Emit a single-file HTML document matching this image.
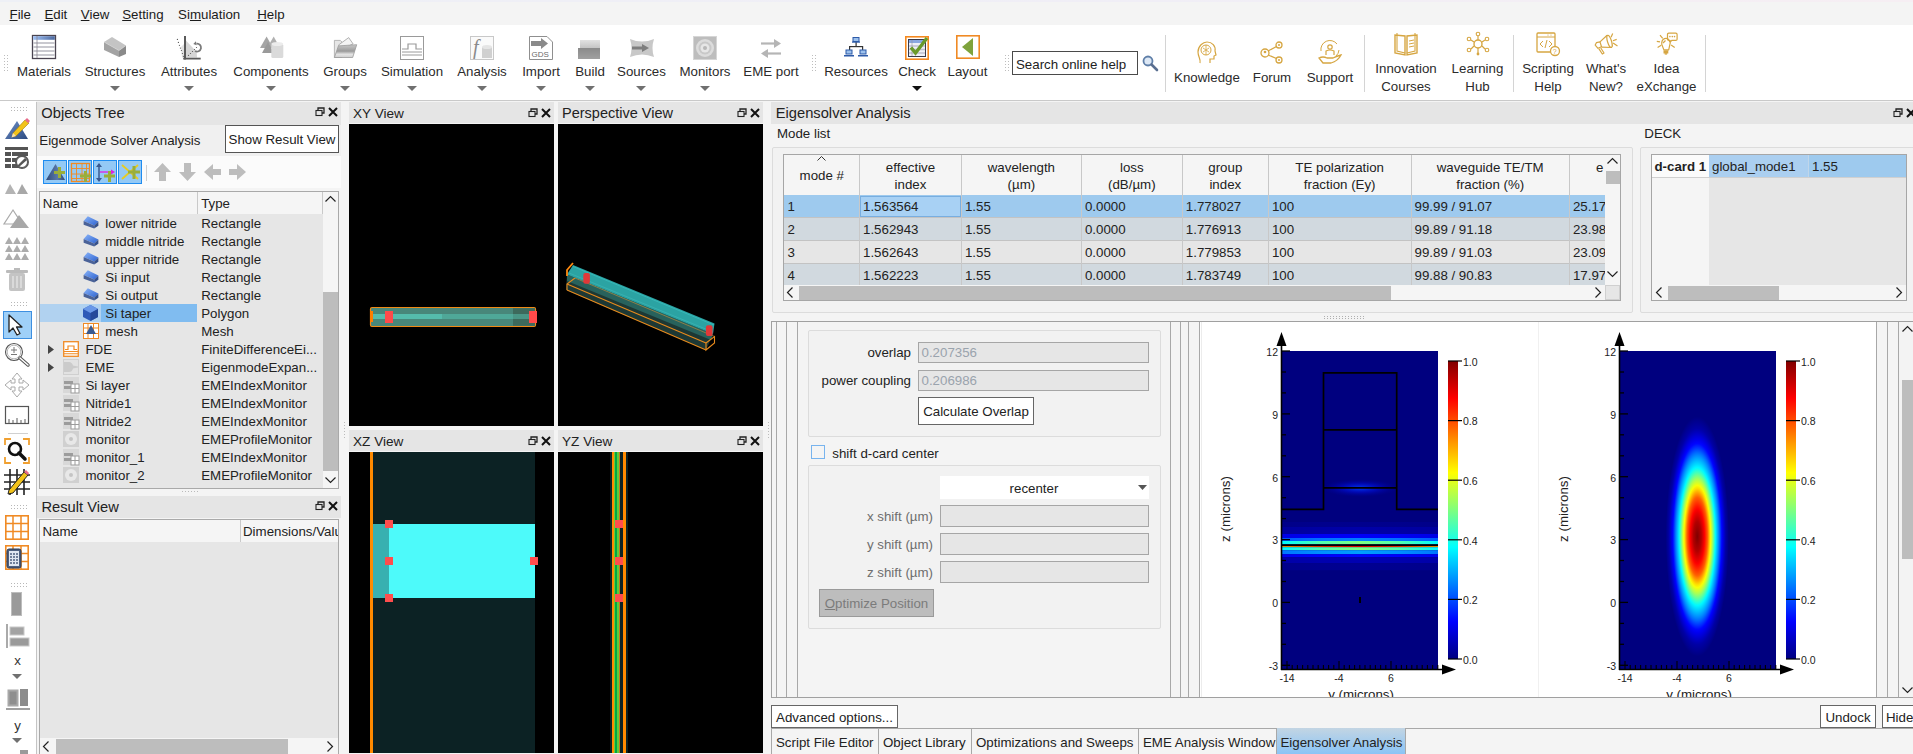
<!DOCTYPE html>
<html><head><meta charset="utf-8"><title>MODE</title>
<style>
html,body{margin:0;padding:0;}
body{width:1913px;height:754px;overflow:hidden;position:relative;background:#f4f4f4;font-family:"Liberation Sans",sans-serif;color:#1b1b1b;}
.a{position:absolute;}
.t{position:absolute;white-space:nowrap;}
svg{overflow:visible;}
</style></head><body>

<div class="a" style="left:0px;top:0px;width:1913px;height:25px;background:#f4f4f4;"></div>
<div class="a" style="left:0;top:0;width:1913px;height:2px;background:linear-gradient(90deg,#eef0f6,#f0eef6 60%,#f6eef3);"></div>
<div class="t " style="left:9.5px;top:7.7px;font-size:13.3px;line-height:13.3px;"><u>F</u>ile</div>
<div class="t " style="left:44.4px;top:7.7px;font-size:13.3px;line-height:13.3px;"><u>E</u>dit</div>
<div class="t " style="left:80.8px;top:7.7px;font-size:13.3px;line-height:13.3px;"><u>V</u>iew</div>
<div class="t " style="left:122.2px;top:7.7px;font-size:13.3px;line-height:13.3px;"><u>S</u>etting</div>
<div class="t " style="left:178.1px;top:7.7px;font-size:13.3px;line-height:13.3px;">Si<u>m</u>ulation</div>
<div class="t " style="left:257.2px;top:7.7px;font-size:13.3px;line-height:13.3px;"><u>H</u>elp</div>
<div class="a" style="left:0px;top:25px;width:1913px;height:75px;background:#ffffff;"></div>
<div class="a" style="left:0px;top:100px;width:1913px;height:1px;background:#c9c9c9;"></div>
<svg class="a" style="left:32px;top:35px;" width="24" height="24" viewBox="0 0 24 24"><defs><linearGradient id="mh" x1="0" x2="1"><stop offset="0" stop-color="#9ec0f5"/><stop offset="1" stop-color="#4d6aa0"/></linearGradient></defs>
<rect x="0.5" y="0.5" width="23" height="23" fill="#fff" stroke="#4a4450" stroke-width="1.3"/>
<rect x="1.2" y="1.2" width="21.6" height="3.6" fill="url(#mh)"/>
<rect x="1.2" y="7" width="21.6" height="2" fill="#c9c9cf"/><rect x="1.2" y="11" width="21.6" height="2" fill="#c9c9cf"/>
<rect x="1.2" y="15" width="21.6" height="2" fill="#c9c9cf"/><rect x="1.2" y="19" width="21.6" height="2" fill="#c9c9cf"/>
<line x1="5" y1="1" x2="5" y2="23" stroke="#8a8590" stroke-width="0.8"/></svg>
<div class="t " style="left:-16.0px;width:120px;text-align:center;top:64.8px;font-size:13.3px;line-height:13.3px;color:#2b2b2b;">Materials</div>
<svg class="a" style="left:103px;top:35px;" width="24" height="24" viewBox="0 0 24 24"><polygon points="1,7 9,2 23,10.5 16,15.5" fill="#c4c4c4"/><polygon points="1,7 16,15.5 16,22 1,15" fill="#a3a3a3"/><polygon points="16,15.5 23,10.5 23,19 16,22" fill="#8a8a8a"/><polyline points="1,7 16,15.5 23,10.5" fill="none" stroke="#d8d8d8" stroke-width="0.6"/></svg>
<div class="t " style="left:55.0px;width:120px;text-align:center;top:64.8px;font-size:13.3px;line-height:13.3px;color:#2b2b2b;">Structures</div>
<svg class="a" style="left:110px;top:86px;" width="10" height="5" viewBox="0 0 10 5"><polygon points="0,0 10,0 5,5" fill="#707070"/></svg>
<svg class="a" style="left:177px;top:35px;" width="24" height="24" viewBox="0 0 24 24"><polygon points="4,12 7,9 7,22.5 5,22.5" fill="#e2e2e2"/><polygon points="9,5.4 19.7,17 20,22.5 9,22.5" fill="#d6d6d6"/><rect x="7" y="1" width="2" height="23.5" fill="#5a5a5a"/><rect x="6.2" y="22.7" width="17.5" height="1.8" fill="#5a5a5a"/><circle cx="0.4" cy="4.4" r="0.6" fill="#555"/><circle cx="1.4" cy="7.4" r="0.6" fill="#555"/><circle cx="2.4" cy="10.3" r="0.6" fill="#555"/><circle cx="3.4" cy="13.1" r="0.6" fill="#555"/><circle cx="4.4" cy="15.5" r="0.6" fill="#555"/><circle cx="5.4" cy="18.5" r="0.6" fill="#555"/><circle cx="6.4" cy="21.3" r="0.6" fill="#555"/><circle cx="11.5" cy="20.3" r="0.6" fill="#555"/><circle cx="13.5" cy="18.5" r="0.6" fill="#555"/><circle cx="15.5" cy="16.5" r="0.6" fill="#555"/><circle cx="17.5" cy="14.5" r="0.6" fill="#555"/><circle cx="19.5" cy="12.5" r="0.6" fill="#555"/><path d="M18,16 A4,4 0 1 0 19.5,8.6" fill="none" stroke="#7a7a7a" stroke-width="1.8"/><polygon points="16.3,9 18.9,6.2 19.6,10.3" fill="#7a7a7a"/></svg>
<div class="t " style="left:129.0px;width:120px;text-align:center;top:64.8px;font-size:13.3px;line-height:13.3px;color:#2b2b2b;">Attributes</div>
<svg class="a" style="left:184px;top:86px;" width="10" height="5" viewBox="0 0 10 5"><polygon points="0,0 10,0 5,5" fill="#707070"/></svg>
<svg class="a" style="left:259px;top:35px;" width="24" height="24" viewBox="0 0 24 24"><polygon points="7.6,1.5 14,13 1,13" fill="#a5a5a5"/><polygon points="14.7,1.5 21,13 8,13" fill="#b0b0b0"/><polygon points="9,7 15,18 3,18" fill="#9a9a9a"/>
<rect x="12.3" y="9" width="12" height="14" rx="1.5" fill="#dadada"/><ellipse cx="18.3" cy="9" rx="6" ry="2" fill="#ececec"/></svg>
<div class="t " style="left:211.0px;width:120px;text-align:center;top:64.8px;font-size:13.3px;line-height:13.3px;color:#2b2b2b;">Components</div>
<svg class="a" style="left:266px;top:86px;" width="10" height="5" viewBox="0 0 10 5"><polygon points="0,0 10,0 5,5" fill="#707070"/></svg>
<svg class="a" style="left:333px;top:35px;" width="24" height="24" viewBox="0 0 24 24"><defs><linearGradient id="gfr" x1="0" x2="0" y1="0" y2="1"><stop offset="0" stop-color="#c9c9c9"/><stop offset="0.5" stop-color="#9a9a9a"/><stop offset="0.75" stop-color="#e4e4e4"/><stop offset="1" stop-color="#cfcfcf"/></linearGradient></defs>
<polygon points="1.4,5.4 7.3,5.4 8.9,7 8.9,22.5 1.4,22.5" fill="#e6e6e6" stroke="#a8a8a8" stroke-width="0.8"/>
<polygon points="5.4,10.1 15.7,2.6 20.1,8.9 9,14" fill="#f4f4f4" stroke="#a0a0a0" stroke-width="0.8"/>
<polygon points="5.4,10.9 23.7,9.7 19.7,22.5 1.4,22.5" fill="url(#gfr)" stroke="#9a9a9a" stroke-width="0.8"/></svg>
<div class="t " style="left:285.0px;width:120px;text-align:center;top:64.8px;font-size:13.3px;line-height:13.3px;color:#2b2b2b;">Groups</div>
<svg class="a" style="left:340px;top:86px;" width="10" height="5" viewBox="0 0 10 5"><polygon points="0,0 10,0 5,5" fill="#707070"/></svg>
<svg class="a" style="left:400px;top:36px;" width="24" height="24" viewBox="0 0 24 24"><rect x="0.5" y="0.5" width="23" height="23" fill="#fff" stroke="#9a9a9a"/>
<polyline points="2,13 8,13 8,8 16,8 16,13 22,13" fill="none" stroke="#9a9a9a" stroke-width="1.2"/>
<line x1="2" y1="16" x2="22" y2="16" stroke="#9a9a9a"/><line x1="2" y1="19" x2="22" y2="19" stroke="#9a9a9a"/></svg>
<div class="t " style="left:352.0px;width:120px;text-align:center;top:64.8px;font-size:13.3px;line-height:13.3px;color:#2b2b2b;">Simulation</div>
<svg class="a" style="left:407px;top:86px;" width="10" height="5" viewBox="0 0 10 5"><polygon points="0,0 10,0 5,5" fill="#707070"/></svg>
<svg class="a" style="left:470px;top:36px;" width="24" height="24" viewBox="0 0 24 24"><rect x="0.5" y="0.5" width="23" height="23" fill="#fafafa" stroke="#c8c8c8"/>
<rect x="12" y="11" width="10" height="11" fill="#d0d0d0"/><ellipse cx="17" cy="11" rx="5" ry="2" fill="#e5e5e5"/>
<text x="3" y="18" font-family="Liberation Serif" font-style="italic" font-size="20" fill="#8a8a8a">f</text></svg>
<div class="t " style="left:422.0px;width:120px;text-align:center;top:64.8px;font-size:13.3px;line-height:13.3px;color:#2b2b2b;">Analysis</div>
<svg class="a" style="left:477px;top:86px;" width="10" height="5" viewBox="0 0 10 5"><polygon points="0,0 10,0 5,5" fill="#707070"/></svg>
<svg class="a" style="left:529px;top:36px;" width="24" height="24" viewBox="0 0 24 24"><polygon points="0.5,0.5 18,0.5 23.5,6 23.5,23.5 0.5,23.5" fill="#fff" stroke="#8f8f8f"/>
<polygon points="2,5 12,5 12,2 19,7.5 12,13 12,10 2,10" fill="#8a8a8a"/>
<text x="2.5" y="21" font-family="Liberation Sans" font-size="8" fill="#6a6a6a">GDS</text></svg>
<div class="t " style="left:481.0px;width:120px;text-align:center;top:64.8px;font-size:13.3px;line-height:13.3px;color:#2b2b2b;">Import</div>
<svg class="a" style="left:536px;top:86px;" width="10" height="5" viewBox="0 0 10 5"><polygon points="0,0 10,0 5,5" fill="#707070"/></svg>
<svg class="a" style="left:578px;top:37px;" width="24" height="24" viewBox="0 0 24 24"><defs><linearGradient id="bd1" x1="0" x2="0" y1="0" y2="1"><stop offset="0" stop-color="#e2e2e2"/><stop offset="1" stop-color="#c4c4c4"/></linearGradient><linearGradient id="bd2" x1="0" x2="0" y1="0" y2="1"><stop offset="0" stop-color="#8a8a8a"/><stop offset="1" stop-color="#a0a0a0"/></linearGradient></defs><rect x="2" y="3" width="20" height="8" fill="url(#bd1)"/><rect x="0" y="11" width="22" height="11" fill="url(#bd2)"/></svg>
<div class="t " style="left:530.0px;width:120px;text-align:center;top:64.8px;font-size:13.3px;line-height:13.3px;color:#2b2b2b;">Build</div>
<svg class="a" style="left:585px;top:86px;" width="10" height="5" viewBox="0 0 10 5"><polygon points="0,0 10,0 5,5" fill="#707070"/></svg>
<svg class="a" style="left:630px;top:37px;" width="24" height="24" viewBox="0 0 24 24"><path d="M0,2 Q12,7 24,2 Q21,11 24,20 Q12,15 0,20 Q3,11 0,2 Z" fill="#c8c8c8"/><polygon points="2,9.5 12,9.5 12,7 19,11 12,15 12,12.5 2,12.5" fill="#7e7e7e"/></svg>
<div class="t " style="left:581.5px;width:120px;text-align:center;top:64.8px;font-size:13.3px;line-height:13.3px;color:#2b2b2b;">Sources</div>
<svg class="a" style="left:636px;top:86px;" width="10" height="5" viewBox="0 0 10 5"><polygon points="0,0 10,0 5,5" fill="#707070"/></svg>
<svg class="a" style="left:693px;top:36px;" width="24" height="24" viewBox="0 0 24 24"><rect x="0.5" y="0.5" width="23" height="23" fill="#bdbdbd" stroke="#d6d6d6"/><circle cx="12" cy="12" r="9" fill="#dcdcdc"/><circle cx="12" cy="12" r="6.5" fill="#c8c8c8"/><circle cx="12" cy="12" r="4.5" fill="#e6e6e6"/><circle cx="12" cy="12" r="2" fill="#b8b8b8"/></svg>
<div class="t " style="left:645.0px;width:120px;text-align:center;top:64.8px;font-size:13.3px;line-height:13.3px;color:#2b2b2b;">Monitors</div>
<svg class="a" style="left:700px;top:86px;" width="10" height="5" viewBox="0 0 10 5"><polygon points="0,0 10,0 5,5" fill="#707070"/></svg>
<svg class="a" style="left:759px;top:38px;" width="24" height="24" viewBox="0 0 24 24"><path d="M2,5.5 L17,5.5" stroke="#b5b5b5" stroke-width="2.2"/><polygon points="15,1 22,5.5 15,10" fill="#b5b5b5"/><path d="M22,15.5 L7,15.5" stroke="#b5b5b5" stroke-width="2.2"/><polygon points="9,11 2,15.5 9,20" fill="#b5b5b5"/></svg>
<div class="t " style="left:711.0px;width:120px;text-align:center;top:64.8px;font-size:13.3px;line-height:13.3px;color:#2b2b2b;">EME port</div>
<svg class="a" style="left:844px;top:37px;" width="24" height="24" viewBox="0 0 24 24"><rect x="8.5" y="0" width="7" height="5" fill="#2d5aa8"/><rect x="9.5" y="1" width="5" height="3" fill="#9cc0ec"/><rect x="11.5" y="5" width="1.2" height="5" fill="#333"/><rect x="5" y="9" width="14" height="1.2" fill="#333"/><rect x="5" y="9" width="1.2" height="4" fill="#333"/><rect x="18" y="9" width="1.2" height="4" fill="#333"/>
<rect x="1.5" y="12.5" width="7" height="5" fill="#2d5aa8"/><rect x="2.5" y="13.5" width="5" height="3" fill="#9cc0ec"/><rect x="15.5" y="12.5" width="7" height="5" fill="#2d5aa8"/><rect x="16.5" y="13.5" width="5" height="3" fill="#9cc0ec"/>
<rect x="0" y="18" width="10" height="1.5" fill="#2d5aa8"/><rect x="14" y="18" width="10" height="1.5" fill="#2d5aa8"/><rect x="8" y="4.5" width="8" height="1.2" fill="#2d5aa8"/></svg>
<div class="t " style="left:796.0px;width:120px;text-align:center;top:64.8px;font-size:13.3px;line-height:13.3px;color:#2b2b2b;">Resources</div>
<svg class="a" style="left:905px;top:36px;" width="24" height="24" viewBox="0 0 24 24"><rect x="0.8" y="0.8" width="22.4" height="22.4" fill="#fff" stroke="#f5891f" stroke-width="1.6"/>
<rect x="3.5" y="3.5" width="17" height="17" fill="#eef0f6" stroke="#3a3a48" stroke-width="1"/><rect x="4" y="4" width="16" height="3" fill="#8aa8e0"/><path d="M4,10 h16 M4,13.5 h16 M4,17 h16" stroke="#c0c0d0" stroke-width="1.4"/><line x1="7" y1="4" x2="7" y2="20" stroke="#9090a0" stroke-width="0.6"/>
<polyline points="6,11.5 10.5,17 22,2" fill="none" stroke="#6a9a2a" stroke-width="3.4"/></svg>
<div class="t " style="left:857.0px;width:120px;text-align:center;top:64.8px;font-size:13.3px;line-height:13.3px;color:#2b2b2b;">Check</div>
<svg class="a" style="left:912px;top:86px;" width="10" height="5" viewBox="0 0 10 5"><polygon points="0,0 10,0 5,5" fill="#111"/></svg>
<svg class="a" style="left:956px;top:35px;" width="24" height="24" viewBox="0 0 24 24"><rect x="0.8" y="0.8" width="22.4" height="22.4" fill="#fff" stroke="#f08a24" stroke-width="1.6"/><polygon points="17,3 17,21 6,12" fill="#7ea33c"/></svg>
<div class="t " style="left:907.5px;width:120px;text-align:center;top:64.8px;font-size:13.3px;line-height:13.3px;color:#2b2b2b;">Layout</div>
<svg class="a" style="left:4px;top:55px;" width="6" height="18" viewBox="0 0 6 18"><rect x="0" y="0" width="1" height="1" fill="#bdbdbd"/><rect x="0" y="3" width="1" height="1" fill="#bdbdbd"/><rect x="0" y="6" width="1" height="1" fill="#bdbdbd"/><rect x="0" y="9" width="1" height="1" fill="#bdbdbd"/><rect x="0" y="12" width="1" height="1" fill="#bdbdbd"/><rect x="0" y="15" width="1" height="1" fill="#bdbdbd"/><rect x="3" y="0" width="1" height="1" fill="#bdbdbd"/><rect x="3" y="3" width="1" height="1" fill="#bdbdbd"/><rect x="3" y="6" width="1" height="1" fill="#bdbdbd"/><rect x="3" y="9" width="1" height="1" fill="#bdbdbd"/><rect x="3" y="12" width="1" height="1" fill="#bdbdbd"/><rect x="3" y="15" width="1" height="1" fill="#bdbdbd"/></svg>
<svg class="a" style="left:812px;top:55px;" width="6" height="18" viewBox="0 0 6 18"><rect x="0" y="0" width="1" height="1" fill="#bdbdbd"/><rect x="0" y="3" width="1" height="1" fill="#bdbdbd"/><rect x="0" y="6" width="1" height="1" fill="#bdbdbd"/><rect x="0" y="9" width="1" height="1" fill="#bdbdbd"/><rect x="0" y="12" width="1" height="1" fill="#bdbdbd"/><rect x="0" y="15" width="1" height="1" fill="#bdbdbd"/><rect x="3" y="0" width="1" height="1" fill="#bdbdbd"/><rect x="3" y="3" width="1" height="1" fill="#bdbdbd"/><rect x="3" y="6" width="1" height="1" fill="#bdbdbd"/><rect x="3" y="9" width="1" height="1" fill="#bdbdbd"/><rect x="3" y="12" width="1" height="1" fill="#bdbdbd"/><rect x="3" y="15" width="1" height="1" fill="#bdbdbd"/></svg>
<svg class="a" style="left:1005px;top:55px;" width="6" height="18" viewBox="0 0 6 18"><rect x="0" y="0" width="1" height="1" fill="#bdbdbd"/><rect x="0" y="3" width="1" height="1" fill="#bdbdbd"/><rect x="0" y="6" width="1" height="1" fill="#bdbdbd"/><rect x="0" y="9" width="1" height="1" fill="#bdbdbd"/><rect x="0" y="12" width="1" height="1" fill="#bdbdbd"/><rect x="0" y="15" width="1" height="1" fill="#bdbdbd"/><rect x="3" y="0" width="1" height="1" fill="#bdbdbd"/><rect x="3" y="3" width="1" height="1" fill="#bdbdbd"/><rect x="3" y="6" width="1" height="1" fill="#bdbdbd"/><rect x="3" y="9" width="1" height="1" fill="#bdbdbd"/><rect x="3" y="12" width="1" height="1" fill="#bdbdbd"/><rect x="3" y="15" width="1" height="1" fill="#bdbdbd"/></svg>
<div class="a" style="left:1012px;top:51px;width:126px;height:24px;background:#fff;box-sizing:border-box;border:1.3px solid #4a4a4a;"></div>
<div class="t " style="left:1016.0px;top:57.7px;font-size:13.3px;line-height:13.3px;color:#222;">Search online help</div>
<svg class="a" style="left:1142px;top:55px;" width="16" height="16" viewBox="0 0 16 16"><circle cx="6" cy="6" r="4.5" fill="#dde8f5" stroke="#5f7fa8" stroke-width="1.8"/><line x1="9.5" y1="9.5" x2="15" y2="15" stroke="#5a6f90" stroke-width="2.6" stroke-linecap="round"/></svg>
<div class="a" style="left:1165px;top:35px;width:1px;height:57px;background:#d4d4d4;"></div>
<div class="a" style="left:1364px;top:35px;width:1px;height:57px;background:#d4d4d4;"></div>
<div class="a" style="left:1513px;top:35px;width:1px;height:57px;background:#d4d4d4;"></div>
<div class="a" style="left:1705px;top:35px;width:1px;height:57px;background:#d4d4d4;"></div>
<svg class="a" style="left:1195px;top:41px;" width="24" height="24" viewBox="0 0 24 24"><path d="M5,22 C6,18 3,16 3,11 C3,5 8,1 12,1 C17,1 21,5 20,10 L21,14 L19,15 L19,18 L15,18 L15,22" fill="none" stroke="#d6a642" stroke-width="1.2"/>
<circle cx="11" cy="9" r="5" fill="none" stroke="#d6a642" stroke-width="1"/><path d="M8,7 L14,11 M14,7 L8,11 M11,4 L11,14" stroke="#d6a642" stroke-width="0.8"/></svg>
<div class="t " style="left:1147.0px;width:120px;text-align:center;top:70.8px;font-size:13.3px;line-height:13.3px;color:#2b2b2b;">Knowledge</div>
<svg class="a" style="left:1260px;top:41px;" width="24" height="24" viewBox="0 0 24 24"><circle cx="5" cy="12" r="4" fill="none" stroke="#d6a642" stroke-width="1.3"/><circle cx="19" cy="4" r="3" fill="none" stroke="#d6a642" stroke-width="1.3"/><circle cx="19" cy="19" r="3" fill="none" stroke="#d6a642" stroke-width="1.3"/>
<line x1="8" y1="10" x2="16.5" y2="5.5" stroke="#d6a642" stroke-width="1.3"/><line x1="8" y1="14" x2="16.5" y2="17.5" stroke="#d6a642" stroke-width="1.3"/><circle cx="5" cy="11" r="1.3" fill="#d6a642"/><circle cx="19" cy="4" r="1" fill="#d6a642"/><circle cx="19" cy="19" r="1" fill="#d6a642"/></svg>
<div class="t " style="left:1212.0px;width:120px;text-align:center;top:70.8px;font-size:13.3px;line-height:13.3px;color:#2b2b2b;">Forum</div>
<svg class="a" style="left:1318px;top:41px;" width="24" height="24" viewBox="0 0 24 24"><circle cx="12" cy="6" r="2.2" fill="none" stroke="#d6a642" stroke-width="1.2"/><path d="M8,14 L8,10 Q12,8 16,10 L16,14" fill="none" stroke="#d6a642" stroke-width="1.2"/>
<path d="M3,10 A9,9 0 0 1 19,3" fill="none" stroke="#d6a642" stroke-width="1"/><path d="M21,9 A9,9 0 0 1 18,15" fill="none" stroke="#d6a642" stroke-width="1"/>
<path d="M1,17 Q5,15 9,17 L15,17 Q19,15 23,14 Q20,20 13,22 L5,22 Z" fill="none" stroke="#d6a642" stroke-width="1.3"/></svg>
<div class="t " style="left:1270.0px;width:120px;text-align:center;top:70.8px;font-size:13.3px;line-height:13.3px;color:#2b2b2b;">Support</div>
<svg class="a" style="left:1394px;top:32px;" width="24" height="24" viewBox="0 0 24 24"><path d="M1,3 L1,21 L11,23 L11,4 Z M23,3 L23,21 L13,23 L13,4 Z" fill="none" stroke="#d6a642" stroke-width="1.4"/><path d="M3,1 L3,19 L11,21 M21,1 L21,19 L13,21" fill="none" stroke="#d6a642" stroke-width="1.1"/>
<line x1="15" y1="9" x2="20" y2="8" stroke="#d6a642"/><line x1="15" y1="12" x2="20" y2="11" stroke="#d6a642"/><line x1="15" y1="15" x2="20" y2="14" stroke="#d6a642"/></svg>
<div class="t " style="left:1346.0px;width:120px;text-align:center;top:62.1px;font-size:13.3px;line-height:13.3px;color:#2b2b2b;">Innovation</div>
<div class="t " style="left:1346.0px;width:120px;text-align:center;top:79.8px;font-size:13.3px;line-height:13.3px;color:#2b2b2b;">Courses</div>
<svg class="a" style="left:1466px;top:32px;" width="24" height="24" viewBox="0 0 24 24"><circle cx="12" cy="12" r="4" fill="none" stroke="#d6a642" stroke-width="1.4"/><circle cx="12" cy="2" r="1.8" fill="none" stroke="#d6a642" stroke-width="1.1"/><line x1="12" y1="4" x2="12" y2="8" stroke="#d6a642" stroke-width="1.2"/>
<circle cx="3" cy="7" r="1.8" fill="none" stroke="#d6a642" stroke-width="1.1"/><circle cx="21" cy="7" r="1.8" fill="none" stroke="#d6a642" stroke-width="1.1"/><circle cx="3" cy="18" r="1.8" fill="none" stroke="#d6a642" stroke-width="1.1"/><circle cx="21" cy="18" r="1.8" fill="none" stroke="#d6a642" stroke-width="1.1"/><circle cx="12" cy="22" r="1.4" fill="#d6a642"/>
<path d="M5,8 L8,10 M19,8 L16,10 M5,17 L8,14 M19,17 L16,14 M12,16 L12,21" stroke="#d6a642" stroke-width="1.2"/></svg>
<div class="t " style="left:1417.5px;width:120px;text-align:center;top:62.1px;font-size:13.3px;line-height:13.3px;color:#2b2b2b;">Learning</div>
<div class="t " style="left:1417.5px;width:120px;text-align:center;top:79.8px;font-size:13.3px;line-height:13.3px;color:#2b2b2b;">Hub</div>
<svg class="a" style="left:1536px;top:32px;" width="24" height="24" viewBox="0 0 24 24"><rect x="1" y="1" width="18" height="19" rx="1" fill="none" stroke="#d6a642" stroke-width="1.3"/><line x1="1" y1="5" x2="19" y2="5" stroke="#d6a642"/><path d="M7,9 L4,12 L7,15 M11,8 L9,16 M13,9 L16,12 L13,15" fill="none" stroke="#d6a642" stroke-width="1"/>
<circle cx="19" cy="19" r="4.5" fill="#fff" stroke="#d6a642" stroke-width="1.3"/><text x="16.8" y="22" font-size="7" font-family="Liberation Sans" fill="#d6a642">?</text><circle cx="12" cy="3" r="0.6" fill="#d6a642"/><circle cx="15" cy="3" r="0.6" fill="#d6a642"/></svg>
<div class="t " style="left:1488.0px;width:120px;text-align:center;top:62.1px;font-size:13.3px;line-height:13.3px;color:#2b2b2b;">Scripting</div>
<div class="t " style="left:1488.0px;width:120px;text-align:center;top:79.8px;font-size:13.3px;line-height:13.3px;color:#2b2b2b;">Help</div>
<svg class="a" style="left:1594px;top:32px;" width="24" height="24" viewBox="0 0 24 24"><g fill="none" stroke="#d6a642" stroke-width="1.2" stroke-linejoin="round">
<polygon points="1.2,13.1 2.4,10.7 6,9.9 7.5,14.7 4,16.3"/>
<path d="M6,9.9 L13.1,3.2 M7.5,15.1 L17.9,15.5"/>
<ellipse cx="15.5" cy="9.4" rx="2" ry="6.3" transform="rotate(-18 15.5 9.4)"/>
<path d="M4.8,16.7 L8.3,22 L10,21 L6.8,16"/>
<path d="M17.1,5.2 L18.7,1.6 M18.9,8.7 L22.7,7.4 M19.1,11.1 L23.5,13.9"/></g></svg>
<div class="t " style="left:1546.0px;width:120px;text-align:center;top:62.1px;font-size:13.3px;line-height:13.3px;color:#2b2b2b;">What's</div>
<div class="t " style="left:1546.0px;width:120px;text-align:center;top:79.8px;font-size:13.3px;line-height:13.3px;color:#2b2b2b;">New?</div>
<svg class="a" style="left:1654px;top:32px;" width="24" height="24" viewBox="0 0 24 24"><g fill="none" stroke="#d6a642" stroke-width="1.2" stroke-linejoin="round">
<path d="M9.9,17.9 L7.8,12.5 Q7.2,8 10.5,6.6 Q13,5.8 14.5,7.5 L16.3,10.7 L14.7,17.9 Z"/>
<path d="M9,11 L11.5,8.5"/>
<path d="M13.5,2.2 Q13.5,1.2 14.8,1.2 L21.8,1.2 Q23.1,1.2 23.1,2.4 L23.1,7.2 Q23.1,8.3 21.8,8.3 L18,8.3 L16.3,9.8 L16,8.3 L14.8,8.3 Q13.5,8.3 13.5,7 Z"/>
<path d="M6,3.2 L8.7,6.4 M2.8,9.3 L6,9.9 M3.6,15.5 L7.2,13.3 M17.1,13.1 L20.7,15.5"/></g>
<rect x="9.5" y="18.3" width="4.8" height="3.2" fill="#d6a642"/><rect x="10.7" y="21.2" width="2.4" height="1.4" fill="#d6a642"/>
<circle cx="15.9" cy="4.6" r="0.8" fill="#d6a642"/><circle cx="18.3" cy="4.6" r="0.8" fill="#d6a642"/><circle cx="20.5" cy="4.6" r="0.8" fill="#d6a642"/></svg>
<div class="t " style="left:1606.5px;width:120px;text-align:center;top:62.1px;font-size:13.3px;line-height:13.3px;color:#2b2b2b;">Idea</div>
<div class="t " style="left:1606.5px;width:120px;text-align:center;top:79.8px;font-size:13.3px;line-height:13.3px;color:#2b2b2b;">eXchange</div>
<div class="a" style="left:0px;top:101px;width:36px;height:653px;background:#ffffff;"></div>
<div class="a" style="left:36px;top:102px;width:1px;height:652px;background:#c4c4c4;"></div>
<svg class="a" style="left:11px;top:107px;" width="18" height="6" viewBox="0 0 18 6"><rect x="0" y="0" width="1" height="1" fill="#b8b8b8"/><rect x="0" y="3" width="1" height="1" fill="#b8b8b8"/><rect x="3" y="0" width="1" height="1" fill="#b8b8b8"/><rect x="3" y="3" width="1" height="1" fill="#b8b8b8"/><rect x="6" y="0" width="1" height="1" fill="#b8b8b8"/><rect x="6" y="3" width="1" height="1" fill="#b8b8b8"/><rect x="9" y="0" width="1" height="1" fill="#b8b8b8"/><rect x="9" y="3" width="1" height="1" fill="#b8b8b8"/><rect x="12" y="0" width="1" height="1" fill="#b8b8b8"/><rect x="12" y="3" width="1" height="1" fill="#b8b8b8"/><rect x="15" y="0" width="1" height="1" fill="#b8b8b8"/><rect x="15" y="3" width="1" height="1" fill="#b8b8b8"/></svg>
<svg class="a" style="left:5px;top:117px;" width="24" height="22" viewBox="0 0 24 22"><defs><linearGradient id="ptri" x1="0" x2="1" y1="0" y2="1"><stop offset="0" stop-color="#6e8fc8"/><stop offset="1" stop-color="#2b4a80"/></linearGradient></defs>
<polygon points="12,4 23,22 0,22" fill="url(#ptri)"/><polygon points="8,16 20,3 24,6 11,19 7,20" fill="#f2c21a" stroke="#a07a10" stroke-width="0.6"/><polygon points="20,3 22,1 25,4 23,6" fill="#e86a8a"/><polygon points="8,16 11,19 6.5,20.5" fill="#f5e0b0"/></svg>
<svg class="a" style="left:5px;top:147px;" width="24" height="23" viewBox="0 0 24 23"><rect x="0" y="0" width="23" height="3" fill="#555"/><rect x="0" y="5" width="6" height="4" fill="#555"/><rect x="7" y="5" width="16" height="4" fill="#555"/>
<rect x="0" y="11" width="6" height="4" fill="#555"/><rect x="7" y="11" width="8" height="4" fill="#555"/><rect x="0" y="17" width="6" height="4" fill="#555"/><rect x="7" y="17" width="8" height="4" fill="#555"/>
<circle cx="17" cy="15" r="7" fill="#555"/><circle cx="17" cy="15" r="5.5" fill="#fff" stroke="#555"/><polygon points="12,19 20,11 22,13 14,20" fill="#555"/></svg>
<svg class="a" style="left:5px;top:184px;" width="24" height="10" viewBox="0 0 24 10"><polygon points="5,0 11,10 0,10" fill="#b4b4b4"/><polygon points="17,0 23,10 12,10" fill="#a8a8a8"/></svg>
<svg class="a" style="left:4px;top:209px;" width="26" height="19" viewBox="0 0 26 19"><polygon points="9,1 18,15 0,15" fill="none" stroke="#aaa" stroke-width="1.2"/><polygon points="15,6 25,19 6,19" fill="#a8a8a8"/></svg>
<svg class="a" style="left:5px;top:237px;" width="24" height="23" viewBox="0 0 24 23"><polygon points="4,0 8,7 0,7" fill="#acacac"/><polygon points="12,0 16,7 8,7" fill="#acacac"/><polygon points="20,0 24,7 16,7" fill="#acacac"/><polygon points="4,8 8,15 0,15" fill="#acacac"/><polygon points="12,8 16,15 8,15" fill="#acacac"/><polygon points="20,8 24,15 16,15" fill="#acacac"/><polygon points="4,16 8,23 0,23" fill="#acacac"/><polygon points="12,16 16,23 8,23" fill="#acacac"/><polygon points="20,16 24,23 16,23" fill="#acacac"/></svg>
<svg class="a" style="left:6px;top:268px;" width="22" height="23" viewBox="0 0 22 23"><rect x="3" y="5" width="16" height="18" rx="2" fill="#c4c4c4"/><rect x="0" y="2" width="22" height="3" rx="1" fill="#bbb"/><rect x="8" y="0" width="6" height="3" fill="#bbb"/><line x1="7" y1="8" x2="7" y2="20" stroke="#e2e2e2" stroke-width="1.5"/><line x1="11" y1="8" x2="11" y2="20" stroke="#e2e2e2" stroke-width="1.5"/><line x1="15" y1="8" x2="15" y2="20" stroke="#e2e2e2" stroke-width="1.5"/></svg>
<svg class="a" style="left:11px;top:302px;" width="18" height="6" viewBox="0 0 18 6"><rect x="0" y="0" width="1" height="1" fill="#b8b8b8"/><rect x="0" y="3" width="1" height="1" fill="#b8b8b8"/><rect x="3" y="0" width="1" height="1" fill="#b8b8b8"/><rect x="3" y="3" width="1" height="1" fill="#b8b8b8"/><rect x="6" y="0" width="1" height="1" fill="#b8b8b8"/><rect x="6" y="3" width="1" height="1" fill="#b8b8b8"/><rect x="9" y="0" width="1" height="1" fill="#b8b8b8"/><rect x="9" y="3" width="1" height="1" fill="#b8b8b8"/><rect x="12" y="0" width="1" height="1" fill="#b8b8b8"/><rect x="12" y="3" width="1" height="1" fill="#b8b8b8"/><rect x="15" y="0" width="1" height="1" fill="#b8b8b8"/><rect x="15" y="3" width="1" height="1" fill="#b8b8b8"/></svg>
<div class="a" style="left:3px;top:311px;width:29px;height:28px;background:#9fd0f8;box-sizing:border-box;border:1px solid #3d8fe0;"></div>
<svg class="a" style="left:8px;top:314px;" width="18" height="22" viewBox="0 0 18 22"><polygon points="1,1 1,18 5,14 9,21 12,19.5 8.5,13 14,13" fill="#fff" stroke="#222" stroke-width="1.3" stroke-linejoin="round"/></svg>
<svg class="a" style="left:4px;top:342px;" width="26" height="25" viewBox="0 0 26 25"><circle cx="10" cy="10" r="8.5" fill="#fff" stroke="#555" stroke-width="1.1"/><circle cx="10" cy="10" r="6.8" fill="none" stroke="#888" stroke-width="0.6"/><line x1="16" y1="16" x2="24" y2="23" stroke="#555" stroke-width="3.5" stroke-linecap="round"/><line x1="16" y1="16" x2="24" y2="23" stroke="#fff" stroke-width="1.5" stroke-linecap="round"/><path d="M7,8 L13,8 M10,5 L10,11 M7,12.5 L13,12.5" stroke="#777" stroke-width="1"/></svg>
<svg class="a" style="left:5px;top:373px;" width="24" height="24" viewBox="0 0 24 24"><polygon points="12,0 17,6 14,6 14,10 18,10 18,7 24,12 18,17 18,14 14,14 14,18 17,18 12,24 7,18 10,18 10,14 6,14 6,17 0,12 6,7 6,10 10,10 10,6 7,6" fill="#fff" stroke="#aaa" stroke-width="1"/></svg>
<svg class="a" style="left:5px;top:406px;" width="24" height="19" viewBox="0 0 24 19"><rect x="0.5" y="0.5" width="23" height="17" fill="#fff" stroke="#555" stroke-width="1.2"/><path d="M4,17 L4,13 M8,17 L8,14 M12,17 L12,12 M16,17 L16,14 M20,17 L20,13" stroke="#777" stroke-width="1.2"/></svg>
<div class="a" style="left:8px;top:433px;width:20px;height:1px;background:#d0d0d0;"></div>
<svg class="a" style="left:5px;top:439px;" width="24" height="25" viewBox="0 0 24 25"><path d="M0,6 L0,0 L6,0 M18,0 L24,0 L24,6 M24,18 L24,24 L18,24 M6,24 L0,24 L0,18" fill="none" stroke="#f0a030" stroke-width="1.8"/><circle cx="10" cy="10" r="6" fill="#fff" stroke="#111" stroke-width="2.6"/><line x1="14" y1="14" x2="20" y2="20" stroke="#111" stroke-width="3.5" stroke-linecap="round"/></svg>
<svg class="a" style="left:4px;top:469px;" width="26" height="26" viewBox="0 0 26 26"><path d="M6,0 L6,26 M13,0 L13,26 M20,0 L20,26 M0,6 L26,6 M0,13 L26,13 M0,20 L26,20" stroke="#222" stroke-width="1.6"/><polygon points="5,21 20,3 24,6 9,24 4,25" fill="#f2c21a" stroke="#222" stroke-width="1"/><polygon points="20,3 22,1 25,4 24,6" fill="#e86a8a"/></svg>
<svg class="a" style="left:11px;top:505px;" width="18" height="6" viewBox="0 0 18 6"><rect x="0" y="0" width="1" height="1" fill="#b8b8b8"/><rect x="0" y="3" width="1" height="1" fill="#b8b8b8"/><rect x="3" y="0" width="1" height="1" fill="#b8b8b8"/><rect x="3" y="3" width="1" height="1" fill="#b8b8b8"/><rect x="6" y="0" width="1" height="1" fill="#b8b8b8"/><rect x="6" y="3" width="1" height="1" fill="#b8b8b8"/><rect x="9" y="0" width="1" height="1" fill="#b8b8b8"/><rect x="9" y="3" width="1" height="1" fill="#b8b8b8"/><rect x="12" y="0" width="1" height="1" fill="#b8b8b8"/><rect x="12" y="3" width="1" height="1" fill="#b8b8b8"/><rect x="15" y="0" width="1" height="1" fill="#b8b8b8"/><rect x="15" y="3" width="1" height="1" fill="#b8b8b8"/></svg>
<svg class="a" style="left:5px;top:515px;" width="24" height="25" viewBox="0 0 24 25"><rect x="0.8" y="0.8" width="22.4" height="23.4" fill="#fff" stroke="#f08a24" stroke-width="1.6"/><path d="M8,1 L8,24 M16,1 L16,24 M1,8.5 L23,8.5 M1,16.5 L23,16.5" stroke="#f08a24" stroke-width="1.5"/></svg>
<svg class="a" style="left:5px;top:545px;" width="24" height="25" viewBox="0 0 24 25"><rect x="0.8" y="0.8" width="22.4" height="23.4" fill="#fff" stroke="#f08a24" stroke-width="1.6"/><path d="M8,1 L8,24 M16,1 L16,24 M1,8.5 L23,8.5 M1,16.5 L23,16.5" stroke="#f08a24" stroke-width="1.5"/><rect x="2" y="4" width="14" height="19" rx="2" fill="#4d5f80" stroke="#2e3a50"/><rect x="4" y="6" width="10" height="15" fill="#dfe6f2"/><path d="M5,9 h2 M8,9 h2 M11,9 h2 M5,12 h2 M8,12 h2 M11,12 h2 M5,15 h2 M8,15 h2 M11,15 h2 M5,18 h2 M8,18 h2 M11,18 h2" stroke="#4d5f80" stroke-width="1.5"/></svg>
<svg class="a" style="left:11px;top:583px;" width="18" height="6" viewBox="0 0 18 6"><rect x="0" y="0" width="1" height="1" fill="#b8b8b8"/><rect x="0" y="3" width="1" height="1" fill="#b8b8b8"/><rect x="3" y="0" width="1" height="1" fill="#b8b8b8"/><rect x="3" y="3" width="1" height="1" fill="#b8b8b8"/><rect x="6" y="0" width="1" height="1" fill="#b8b8b8"/><rect x="6" y="3" width="1" height="1" fill="#b8b8b8"/><rect x="9" y="0" width="1" height="1" fill="#b8b8b8"/><rect x="9" y="3" width="1" height="1" fill="#b8b8b8"/><rect x="12" y="0" width="1" height="1" fill="#b8b8b8"/><rect x="12" y="3" width="1" height="1" fill="#b8b8b8"/><rect x="15" y="0" width="1" height="1" fill="#b8b8b8"/><rect x="15" y="3" width="1" height="1" fill="#b8b8b8"/></svg>
<svg class="a" style="left:11px;top:592px;" width="11" height="24" viewBox="0 0 11 24"><rect x="0.5" y="0.5" width="10" height="23" fill="#9a9a9a" stroke="#bdbdbd"/></svg>
<svg class="a" style="left:6px;top:624px;" width="23" height="24" viewBox="0 0 23 24"><rect x="0" y="0" width="2" height="24" fill="#aaa"/><rect x="4" y="3" width="14" height="8" fill="#a3a3a3" stroke="#c8c8c8"/><rect x="4" y="14" width="19" height="8" fill="#9a9a9a" stroke="#c8c8c8"/></svg>
<div class="t " style="left:7.5px;width:20px;text-align:center;top:653.9px;font-size:13.3px;line-height:13.3px;color:#333;">x</div>
<svg class="a" style="left:12px;top:674px;" width="10" height="5" viewBox="0 0 10 5"><polygon points="0,0 10,0 5,5" fill="#707070"/></svg>
<svg class="a" style="left:6px;top:689px;" width="24" height="22" viewBox="0 0 24 22"><rect x="2.5" y="1.5" width="9" height="15" fill="#8e8e8e" stroke="#a8a8a8" stroke-width="2"/><rect x="14" y="0" width="8" height="17" fill="#8c8c8c"/><rect x="0" y="19" width="24" height="2" fill="#a0a0a0"/></svg>
<div class="t " style="left:7.5px;width:20px;text-align:center;top:718.9px;font-size:13.3px;line-height:13.3px;color:#333;">y</div>
<svg class="a" style="left:12px;top:738px;" width="10" height="5" viewBox="0 0 10 5"><polygon points="0,0 10,0 5,5" fill="#707070"/></svg>
<svg class="a" style="left:5px;top:750px;" width="24" height="4" viewBox="0 0 24 4"><rect x="15" y="0" width="8" height="4" fill="#9a9a9a"/></svg>
<div class="a" style="left:37px;top:102px;width:304px;height:23px;background:#e5e5e5;"></div>
<div class="t " style="left:41.3px;top:105.8px;font-size:14.7px;line-height:14.7px;color:#222;">Objects Tree</div>
<svg class="a" style="left:315px;top:107px;" width="24" height="10" viewBox="0 0 24 10"><rect x="1" y="3.5" width="6" height="5" fill="none" stroke="#222" stroke-width="1.1"/><path d="M3,3.5 L3,1 L9,1 L9,6 L7,6" fill="none" stroke="#222" stroke-width="1.3"/><path d="M14,1 L22,9 M22,1 L14,9" stroke="#111" stroke-width="2"/></svg>
<div class="a" style="left:37px;top:125px;width:304px;height:31px;background:#f0f0f0;"></div>
<div class="t " style="left:39.3px;top:133.7px;font-size:13.3px;line-height:13.3px;color:#222;">Eigenmode Solver Analysis</div>
<div class="a" style="left:225px;top:125px;width:114px;height:28px;background:#fff;box-sizing:border-box;border:1px solid #555;"></div>
<div class="t " style="left:225.0px;width:114px;text-align:center;top:133.4px;font-size:13.3px;line-height:13.3px;color:#222;">Show Result View</div>
<div class="a" style="left:37px;top:156px;width:304px;height:32px;background:#fbfbfb;"></div>
<div class="a" style="left:43px;top:160px;width:24px;height:24px;background:#94c9f5;box-sizing:border-box;border:1.3px solid #1f8cf0;"></div>
<svg class="a" style="left:44px;top:161px;" width="22" height="22" viewBox="0 0 22 22"><defs><linearGradient id="tg1" x1="0" x2="1"><stop offset="0" stop-color="#2e4a7a"/><stop offset="0.6" stop-color="#5a78a8"/><stop offset="1" stop-color="#2e4a7a"/></linearGradient></defs><polygon points="11.5,3 21,19 2,19" fill="url(#tg1)"/><path d="M10,11.5 h11 M15.5,6 v11" stroke="#9aae3a" stroke-width="3"/></svg>
<div class="a" style="left:68px;top:160px;width:24px;height:24px;background:#94c9f5;box-sizing:border-box;border:1.3px solid #1f8cf0;"></div>
<svg class="a" style="left:69px;top:161px;" width="22" height="22" viewBox="0 0 22 22"><rect x="2.5" y="2.5" width="18" height="18" fill="none" stroke="#f08a24" stroke-width="1.3"/><path d="M2.5,7.5 h18 M2.5,13 h18 M2.5,17.5 h18 M7.5,2.5 v18 M13,2.5 v18 M17.5,2.5 v18" stroke="#f08a24" stroke-width="0.9"/><path d="M11,15 h11 M16.5,10 v11" stroke="#9aae3a" stroke-width="3"/></svg>
<div class="a" style="left:93px;top:160px;width:24px;height:24px;background:#94c9f5;box-sizing:border-box;border:1.3px solid #1f8cf0;"></div>
<svg class="a" style="left:94px;top:161px;" width="22" height="22" viewBox="0 0 22 22"><path d="M5,3 v17" stroke="#3a5a90" stroke-width="1.5"/><polygon points="5,2 8,6 2,6" fill="#3a5a90"/><polygon points="5,21 8,17 2,17" fill="#3a5a90"/><path d="M6,11 h12" stroke="#e020e0" stroke-width="1.3"/><polygon points="21,11 17,8.5 17,13.5" fill="#e020e0"/><path d="M10,15 h11 M15.5,10 v11" stroke="#9aae3a" stroke-width="3"/></svg>
<div class="a" style="left:118px;top:160px;width:24px;height:24px;background:#94c9f5;box-sizing:border-box;border:1.3px solid #1f8cf0;"></div>
<svg class="a" style="left:119px;top:161px;" width="22" height="22" viewBox="0 0 22 22"><path d="M3,4 L11,11 L3,18 M19,4 L11,11 L19,18" fill="none" stroke="#e8cc20" stroke-width="1.8"/><path d="M9,11 h12 M15,5 v13" stroke="#9aae3a" stroke-width="3"/></svg>
<div class="a" style="left:146px;top:165px;width:1px;height:16px;background:#cfcfcf;"></div>
<svg class="a" style="left:154px;top:163px;" width="17" height="18" viewBox="0 0 17 18"><polygon points="8.5,0 17,9 12,9 12,18 5,18 5,9 0,9" fill="#bdbdbd"/></svg>
<svg class="a" style="left:179px;top:163px;" width="17" height="18" viewBox="0 0 17 18"><polygon points="8.5,18 17,9 12,9 12,0 5,0 5,9 0,9" fill="#bdbdbd"/></svg>
<svg class="a" style="left:204px;top:164px;" width="17" height="16" viewBox="0 0 17 16"><polygon points="0,8 9,0 9,5 17,5 17,11 9,11 9,16" fill="#bdbdbd"/></svg>
<svg class="a" style="left:229px;top:164px;" width="17" height="16" viewBox="0 0 17 16"><polygon points="17,8 8,0 8,5 0,5 0,11 8,11 8,16" fill="#bdbdbd"/></svg>
<div class="a" style="left:39px;top:191px;width:300px;height:298px;background:#e6e6e6;box-sizing:border-box;border:1px solid #a9a9a9;"></div>
<div class="a" style="left:40px;top:192px;width:283px;height:22px;background:#f5f5f5;"></div>
<div class="a" style="left:197px;top:192px;width:1px;height:22px;background:#c9c9c9;"></div>
<div class="t " style="left:42.8px;top:197.4px;font-size:13.3px;line-height:13.3px;color:#222;">Name</div>
<div class="t " style="left:201.2px;top:197.4px;font-size:13.3px;line-height:13.3px;color:#222;">Type</div>
<div class="a" style="left:323px;top:192px;width:15px;height:296px;background:#f5f5f5;"></div>
<div class="a" style="left:322px;top:192px;width:1px;height:22px;background:#c9c9c9;"></div>
<svg class="a" style="left:325px;top:196px;" width="11" height="6" viewBox="0 0 11 6"><polyline points="0.5,5.5 5.5,0.5 10.5,5.5" fill="none" stroke="#222" stroke-width="1.2"/></svg>
<div class="a" style="left:323px;top:292px;width:15px;height:179px;background:#bdbdbd;"></div>
<svg class="a" style="left:325px;top:477px;" width="11" height="6" viewBox="0 0 11 6"><polyline points="0.5,0.5 5.5,5.5 10.5,0.5" fill="none" stroke="#222" stroke-width="1.2"/></svg>
<svg class="a" style="left:83px;top:216px;" width="16" height="13" viewBox="0 0 16 13"><defs><linearGradient id="bx" x1="0" x2="1" y1="0" y2="1"><stop offset="0" stop-color="#8ab4f8"/><stop offset="1" stop-color="#2d62d0"/></linearGradient></defs>
<polygon points="0.6,5 4.8,0.3 15.4,5.6 11.2,9.4" fill="url(#bx)"/><polygon points="0.6,5 11.2,9.4 11.2,12.5 0.6,8.8" fill="#4a6298"/><polygon points="11.2,9.4 15.4,5.6 15.4,9.8 11.2,12.5" fill="#35508a"/></svg>
<div class="t " style="left:105.3px;top:216.8px;font-size:13.3px;line-height:13.3px;color:#222;">lower nitride</div>
<div class="t " style="left:201.2px;top:216.8px;font-size:13.3px;line-height:13.3px;color:#222;">Rectangle</div>
<svg class="a" style="left:83px;top:234px;" width="16" height="13" viewBox="0 0 16 13"><defs><linearGradient id="bx" x1="0" x2="1" y1="0" y2="1"><stop offset="0" stop-color="#8ab4f8"/><stop offset="1" stop-color="#2d62d0"/></linearGradient></defs>
<polygon points="0.6,5 4.8,0.3 15.4,5.6 11.2,9.4" fill="url(#bx)"/><polygon points="0.6,5 11.2,9.4 11.2,12.5 0.6,8.8" fill="#4a6298"/><polygon points="11.2,9.4 15.4,5.6 15.4,9.8 11.2,12.5" fill="#35508a"/></svg>
<div class="t " style="left:105.3px;top:234.8px;font-size:13.3px;line-height:13.3px;color:#222;">middle nitride</div>
<div class="t " style="left:201.2px;top:234.8px;font-size:13.3px;line-height:13.3px;color:#222;">Rectangle</div>
<svg class="a" style="left:83px;top:252px;" width="16" height="13" viewBox="0 0 16 13"><defs><linearGradient id="bx" x1="0" x2="1" y1="0" y2="1"><stop offset="0" stop-color="#8ab4f8"/><stop offset="1" stop-color="#2d62d0"/></linearGradient></defs>
<polygon points="0.6,5 4.8,0.3 15.4,5.6 11.2,9.4" fill="url(#bx)"/><polygon points="0.6,5 11.2,9.4 11.2,12.5 0.6,8.8" fill="#4a6298"/><polygon points="11.2,9.4 15.4,5.6 15.4,9.8 11.2,12.5" fill="#35508a"/></svg>
<div class="t " style="left:105.3px;top:252.8px;font-size:13.3px;line-height:13.3px;color:#222;">upper nitride</div>
<div class="t " style="left:201.2px;top:252.8px;font-size:13.3px;line-height:13.3px;color:#222;">Rectangle</div>
<svg class="a" style="left:83px;top:270px;" width="16" height="13" viewBox="0 0 16 13"><defs><linearGradient id="bx" x1="0" x2="1" y1="0" y2="1"><stop offset="0" stop-color="#8ab4f8"/><stop offset="1" stop-color="#2d62d0"/></linearGradient></defs>
<polygon points="0.6,5 4.8,0.3 15.4,5.6 11.2,9.4" fill="url(#bx)"/><polygon points="0.6,5 11.2,9.4 11.2,12.5 0.6,8.8" fill="#4a6298"/><polygon points="11.2,9.4 15.4,5.6 15.4,9.8 11.2,12.5" fill="#35508a"/></svg>
<div class="t " style="left:105.3px;top:270.8px;font-size:13.3px;line-height:13.3px;color:#222;">Si input</div>
<div class="t " style="left:201.2px;top:270.8px;font-size:13.3px;line-height:13.3px;color:#222;">Rectangle</div>
<svg class="a" style="left:83px;top:288px;" width="16" height="13" viewBox="0 0 16 13"><defs><linearGradient id="bx" x1="0" x2="1" y1="0" y2="1"><stop offset="0" stop-color="#8ab4f8"/><stop offset="1" stop-color="#2d62d0"/></linearGradient></defs>
<polygon points="0.6,5 4.8,0.3 15.4,5.6 11.2,9.4" fill="url(#bx)"/><polygon points="0.6,5 11.2,9.4 11.2,12.5 0.6,8.8" fill="#4a6298"/><polygon points="11.2,9.4 15.4,5.6 15.4,9.8 11.2,12.5" fill="#35508a"/></svg>
<div class="t " style="left:105.3px;top:288.8px;font-size:13.3px;line-height:13.3px;color:#222;">Si output</div>
<div class="t " style="left:201.2px;top:288.8px;font-size:13.3px;line-height:13.3px;color:#222;">Rectangle</div>
<div class="a" style="left:40px;top:304px;width:61px;height:18px;background:#b1d2f0;"></div>
<div class="a" style="left:101px;top:304px;width:96px;height:18px;background:#80bcf0;"></div>
<svg class="a" style="left:83px;top:305px;" width="15" height="16" viewBox="0 0 15 16"><polygon points="7.5,0 15,4 15,12 7.5,16 0,12 0,4" fill="#2d5ab8"/><polygon points="7.5,0 15,4 7.5,8 0,4" fill="#6a98e8"/><polygon points="7.5,8 15,4 15,12 7.5,16" fill="#24489a"/></svg>
<div class="t " style="left:105.3px;top:306.8px;font-size:13.3px;line-height:13.3px;color:#222;">Si taper</div>
<div class="t " style="left:201.2px;top:306.8px;font-size:13.3px;line-height:13.3px;color:#222;">Polygon</div>
<svg class="a" style="left:83px;top:323px;" width="16" height="16" viewBox="0 0 16 16"><rect x="0.5" y="0.5" width="15" height="15" fill="#fff" stroke="#f08a24"/><path d="M5,0 v16 M10.5,0 v16 M0,5 h16 M0,10.5 h16" stroke="#f08a24"/><polygon points="8,2 13,11 3,11" fill="#3a5a90"/></svg>
<div class="t " style="left:105.3px;top:324.8px;font-size:13.3px;line-height:13.3px;color:#222;">mesh</div>
<div class="t " style="left:201.2px;top:324.8px;font-size:13.3px;line-height:13.3px;color:#222;">Mesh</div>
<svg class="a" style="left:63px;top:341px;" width="16" height="16" viewBox="0 0 16 16"><rect x="0.7" y="0.7" width="14.6" height="14.6" fill="#fff" stroke="#f08a24" stroke-width="1.3"/><polyline points="2,8.5 5,8.5 5,5 11,5 11,8.5 14,8.5" fill="none" stroke="#f08a24" stroke-width="1.2"/><path d="M1,10.5 h14 M1,12.8 h14" stroke="#f08a24" stroke-width="1.1"/></svg>
<svg class="a" style="left:48px;top:345px;" width="6" height="9" viewBox="0 0 6 9"><polygon points="0,0 6,4.5 0,9" fill="#444"/></svg>
<div class="t " style="left:85.5px;top:342.8px;font-size:13.3px;line-height:13.3px;color:#222;">FDE</div>
<div class="t " style="left:201.2px;top:342.8px;font-size:13.3px;line-height:13.3px;color:#222;">FiniteDifferenceEi...</div>
<svg class="a" style="left:63px;top:359px;" width="16" height="16" viewBox="0 0 16 16"><rect x="0.5" y="0.5" width="15" height="15" fill="#e2e2e2" stroke="#cfcfcf"/><path d="M1,3 L6,3 Q9,3 10,6.5 L15,7.5 L15,8.5 L10,9.5 Q9,13 6,13 L1,13 Z" fill="#cbcbcb"/></svg>
<svg class="a" style="left:48px;top:363px;" width="6" height="9" viewBox="0 0 6 9"><polygon points="0,0 6,4.5 0,9" fill="#444"/></svg>
<div class="t " style="left:85.5px;top:360.8px;font-size:13.3px;line-height:13.3px;color:#222;">EME</div>
<div class="t " style="left:201.2px;top:360.8px;font-size:13.3px;line-height:13.3px;color:#222;">EigenmodeExpan...</div>
<svg class="a" style="left:63px;top:377px;" width="16" height="16" viewBox="0 0 16 16"><rect x="0" y="0" width="16" height="16" fill="#d8d8d8"/><rect x="1" y="4" width="9" height="3" fill="#9c9c9c"/><rect x="1" y="9" width="9" height="3" fill="#9c9c9c"/><rect x="8" y="7" width="8" height="9" fill="#fff" stroke="#9c9c9c"/><path d="M12,7 v9 M8,11.5 h8" stroke="#9c9c9c"/></svg>
<div class="t " style="left:85.5px;top:378.8px;font-size:13.3px;line-height:13.3px;color:#222;">Si layer</div>
<div class="t " style="left:201.2px;top:378.8px;font-size:13.3px;line-height:13.3px;color:#222;">EMEIndexMonitor</div>
<svg class="a" style="left:63px;top:395px;" width="16" height="16" viewBox="0 0 16 16"><rect x="0" y="0" width="16" height="16" fill="#d8d8d8"/><rect x="1" y="4" width="9" height="3" fill="#9c9c9c"/><rect x="1" y="9" width="9" height="3" fill="#9c9c9c"/><rect x="8" y="7" width="8" height="9" fill="#fff" stroke="#9c9c9c"/><path d="M12,7 v9 M8,11.5 h8" stroke="#9c9c9c"/></svg>
<div class="t " style="left:85.5px;top:396.8px;font-size:13.3px;line-height:13.3px;color:#222;">Nitride1</div>
<div class="t " style="left:201.2px;top:396.8px;font-size:13.3px;line-height:13.3px;color:#222;">EMEIndexMonitor</div>
<svg class="a" style="left:63px;top:413px;" width="16" height="16" viewBox="0 0 16 16"><rect x="0" y="0" width="16" height="16" fill="#d8d8d8"/><rect x="1" y="4" width="9" height="3" fill="#9c9c9c"/><rect x="1" y="9" width="9" height="3" fill="#9c9c9c"/><rect x="8" y="7" width="8" height="9" fill="#fff" stroke="#9c9c9c"/><path d="M12,7 v9 M8,11.5 h8" stroke="#9c9c9c"/></svg>
<div class="t " style="left:85.5px;top:414.8px;font-size:13.3px;line-height:13.3px;color:#222;">Nitride2</div>
<div class="t " style="left:201.2px;top:414.8px;font-size:13.3px;line-height:13.3px;color:#222;">EMEIndexMonitor</div>
<svg class="a" style="left:63px;top:431px;" width="16" height="16" viewBox="0 0 16 16"><rect x="0" y="0" width="16" height="16" fill="#d0d0d0"/><circle cx="8" cy="8" r="6" fill="#e8e8e8"/><circle cx="8" cy="8" r="2" fill="#c4c4c4"/></svg>
<div class="t " style="left:85.5px;top:432.8px;font-size:13.3px;line-height:13.3px;color:#222;">monitor</div>
<div class="t " style="left:201.2px;top:432.8px;font-size:13.3px;line-height:13.3px;color:#222;">EMEProfileMonitor</div>
<svg class="a" style="left:63px;top:449px;" width="16" height="16" viewBox="0 0 16 16"><rect x="0" y="0" width="16" height="16" fill="#d8d8d8"/><rect x="1" y="4" width="9" height="3" fill="#9c9c9c"/><rect x="1" y="9" width="9" height="3" fill="#9c9c9c"/><rect x="8" y="7" width="8" height="9" fill="#fff" stroke="#9c9c9c"/><path d="M12,7 v9 M8,11.5 h8" stroke="#9c9c9c"/></svg>
<div class="t " style="left:85.5px;top:450.8px;font-size:13.3px;line-height:13.3px;color:#222;">monitor_1</div>
<div class="t " style="left:201.2px;top:450.8px;font-size:13.3px;line-height:13.3px;color:#222;">EMEIndexMonitor</div>
<svg class="a" style="left:63px;top:467px;" width="16" height="16" viewBox="0 0 16 16"><rect x="0" y="0" width="16" height="16" fill="#d0d0d0"/><circle cx="8" cy="8" r="6" fill="#e8e8e8"/><circle cx="8" cy="8" r="2" fill="#c4c4c4"/></svg>
<div class="t " style="left:85.5px;top:468.8px;font-size:13.3px;line-height:13.3px;color:#222;">monitor_2</div>
<div class="t " style="left:201.2px;top:468.8px;font-size:13.3px;line-height:13.3px;color:#222;">EMEProfileMonitor</div>
<svg class="a" style="left:182px;top:491px;" width="18" height="2" viewBox="0 0 18 2"><rect x="0" y="0" width="1" height="1" fill="#bbb"/><rect x="3" y="0" width="1" height="1" fill="#bbb"/><rect x="6" y="0" width="1" height="1" fill="#bbb"/><rect x="9" y="0" width="1" height="1" fill="#bbb"/><rect x="12" y="0" width="1" height="1" fill="#bbb"/><rect x="15" y="0" width="1" height="1" fill="#bbb"/></svg>
<div class="a" style="left:37px;top:496px;width:304px;height:22px;background:#e5e5e5;"></div>
<div class="t " style="left:41.5px;top:500.1px;font-size:14.7px;line-height:14.7px;color:#222;">Result View</div>
<svg class="a" style="left:315px;top:501px;" width="24" height="10" viewBox="0 0 24 10"><rect x="1" y="3.5" width="6" height="5" fill="none" stroke="#222" stroke-width="1.1"/><path d="M3,3.5 L3,1 L9,1 L9,6 L7,6" fill="none" stroke="#222" stroke-width="1.3"/><path d="M14,1 L22,9 M22,1 L14,9" stroke="#111" stroke-width="2"/></svg>
<div class="a" style="left:39px;top:519px;width:300px;height:235px;background:#e6e6e6;box-sizing:border-box;border:1px solid #a9a9a9;"></div>
<div class="a" style="left:40px;top:520px;width:298px;height:22px;background:#f5f5f5;"></div>
<div class="a" style="left:240px;top:520px;width:1px;height:22px;background:#c9c9c9;"></div>
<div class="t " style="left:42.5px;top:525.4px;font-size:13.3px;line-height:13.3px;color:#222;">Name</div>
<div class="t " style="left:243.0px;top:525.4px;font-size:13.3px;line-height:13.3px;color:#222;width:95px;overflow:hidden;">Dimensions/Valu</div>
<div class="a" style="left:40px;top:738px;width:298px;height:16px;background:#f5f5f5;"></div>
<div class="a" style="left:56px;top:739px;width:232px;height:15px;background:#bdbdbd;"></div>
<svg class="a" style="left:43px;top:741px;" width="6" height="11" viewBox="0 0 6 11"><polyline points="5.5,0.5 0.5,5.5 5.5,10.5" fill="none" stroke="#222" stroke-width="1.2"/></svg>
<svg class="a" style="left:327px;top:741px;" width="6" height="11" viewBox="0 0 6 11"><polyline points="0.5,0.5 5.5,5.5 0.5,10.5" fill="none" stroke="#222" stroke-width="1.2"/></svg>
<div class="a" style="left:349px;top:102px;width:205px;height:21px;background:#e5e5e5;"></div>
<div class="t " style="left:353.0px;top:106.7px;font-size:13.6px;line-height:13.6px;color:#222;">XY View</div>
<svg class="a" style="left:528px;top:108px;" width="24" height="10" viewBox="0 0 24 10"><rect x="1" y="3.5" width="6" height="5" fill="none" stroke="#222" stroke-width="1.1"/><path d="M3,3.5 L3,1 L9,1 L9,6 L7,6" fill="none" stroke="#222" stroke-width="1.3"/><path d="M14,1 L22,9 M22,1 L14,9" stroke="#111" stroke-width="2"/></svg>
<div class="a" style="left:349px;top:124px;width:205px;height:302px;background:#000;"></div>
<div class="a" style="left:558px;top:102px;width:205px;height:21px;background:#e5e5e5;"></div>
<div class="t " style="left:562.0px;top:105.9px;font-size:14.5px;line-height:14.5px;color:#222;">Perspective View</div>
<svg class="a" style="left:737px;top:108px;" width="24" height="10" viewBox="0 0 24 10"><rect x="1" y="3.5" width="6" height="5" fill="none" stroke="#222" stroke-width="1.1"/><path d="M3,3.5 L3,1 L9,1 L9,6 L7,6" fill="none" stroke="#222" stroke-width="1.3"/><path d="M14,1 L22,9 M22,1 L14,9" stroke="#111" stroke-width="2"/></svg>
<div class="a" style="left:558px;top:124px;width:205px;height:302px;background:#000;"></div>
<div class="a" style="left:349px;top:430px;width:205px;height:21px;background:#e5e5e5;"></div>
<div class="t " style="left:353.0px;top:434.7px;font-size:13.6px;line-height:13.6px;color:#222;">XZ View</div>
<svg class="a" style="left:528px;top:436px;" width="24" height="10" viewBox="0 0 24 10"><rect x="1" y="3.5" width="6" height="5" fill="none" stroke="#222" stroke-width="1.1"/><path d="M3,3.5 L3,1 L9,1 L9,6 L7,6" fill="none" stroke="#222" stroke-width="1.3"/><path d="M14,1 L22,9 M22,1 L14,9" stroke="#111" stroke-width="2"/></svg>
<div class="a" style="left:349px;top:452px;width:205px;height:301px;background:#000;"></div>
<div class="a" style="left:558px;top:430px;width:205px;height:21px;background:#e5e5e5;"></div>
<div class="t " style="left:562.0px;top:434.7px;font-size:13.6px;line-height:13.6px;color:#222;">YZ View</div>
<svg class="a" style="left:737px;top:436px;" width="24" height="10" viewBox="0 0 24 10"><rect x="1" y="3.5" width="6" height="5" fill="none" stroke="#222" stroke-width="1.1"/><path d="M3,3.5 L3,1 L9,1 L9,6 L7,6" fill="none" stroke="#222" stroke-width="1.3"/><path d="M14,1 L22,9 M22,1 L14,9" stroke="#111" stroke-width="2"/></svg>
<div class="a" style="left:558px;top:452px;width:205px;height:301px;background:#000;"></div>
<svg class="a" style="left:344px;top:422px;" width="3" height="18" viewBox="0 0 3 18"><rect x="0" y="0" width="1" height="1" fill="#bbb"/><rect x="0" y="3" width="1" height="1" fill="#bbb"/><rect x="0" y="6" width="1" height="1" fill="#bbb"/><rect x="0" y="9" width="1" height="1" fill="#bbb"/><rect x="0" y="12" width="1" height="1" fill="#bbb"/><rect x="0" y="15" width="1" height="1" fill="#bbb"/></svg>
<svg class="a" style="left:768px;top:422px;" width="3" height="18" viewBox="0 0 3 18"><rect x="0" y="0" width="1" height="1" fill="#bbb"/><rect x="0" y="3" width="1" height="1" fill="#bbb"/><rect x="0" y="6" width="1" height="1" fill="#bbb"/><rect x="0" y="9" width="1" height="1" fill="#bbb"/><rect x="0" y="12" width="1" height="1" fill="#bbb"/><rect x="0" y="15" width="1" height="1" fill="#bbb"/></svg>
<svg class="a" style="left:368px;top:305px;" width="172" height="25" viewBox="0 0 172 25">
<rect x="2.5" y="2.5" width="165" height="19" rx="1.5" fill="#48877a" stroke="#ef8a16" stroke-width="1.2"/>
<rect x="145" y="3.2" width="22" height="17.6" fill="#3d6a5c"/>
<rect x="5" y="9" width="69" height="5" fill="#55bcac"/>
<rect x="74" y="9" width="71" height="5" fill="#4fa898"/>
<rect x="145" y="9" width="17" height="5" fill="#4a9686"/>
<rect x="2" y="6" width="3" height="11" fill="#ff7d00"/>
<rect x="17" y="6" width="8" height="12" fill="#ff4a4a"/>
<rect x="161" y="6" width="8" height="12" fill="#ff4a4a"/>
</svg>
<svg class="a" style="left:558px;top:124px;" width="205" height="302" viewBox="0 0 205 302"><g transform="translate(-558,-124)">
<polygon points="567,274.5 713,334 706,350 566,290" fill="#1d3834"/>
<polygon points="567,274.5 713,334 711,340 567,281" fill="#28625c"/>
<polygon points="573,265 714.5,323.5 713,334 567,274.5" fill="#2ba3a3"/>
<line x1="573" y1="266.5" x2="714" y2="325" stroke="#3cc0c0" stroke-width="1" opacity="0.7"/>
<line x1="569" y1="273" x2="713" y2="332" stroke="#47c5c5" stroke-width="0.8" opacity="0.5"/>
<line x1="567" y1="284" x2="706" y2="343" stroke="#e88a1c" stroke-width="1.1"/>
<line x1="567" y1="290" x2="706" y2="350" stroke="#e88a1c" stroke-width="1.1"/>
<line x1="575" y1="278" x2="714.5" y2="336.5" stroke="#c09040" stroke-width="0.8" opacity="0.8"/>
<polyline points="706,343 714.5,336.5 714.5,343 706,350 706,343" fill="none" stroke="#e88a1c" stroke-width="1.1"/>
<polyline points="567,290 567,284 575,278" fill="none" stroke="#e88a1c" stroke-width="1.1"/>
<polyline points="567,276 567,270 573,263" fill="none" stroke="#ff8a10" stroke-width="1.8"/>
<rect x="583.3" y="272.9" width="6.6" height="10.8" rx="2" fill="#e03838"/>
<rect x="705.9" y="325.3" width="6.6" height="10.6" rx="2" fill="#e03838"/>
</g></svg>
<div class="a" style="left:373px;top:452px;width:162px;height:301px;background:#0c2224;"></div>
<div class="a" style="left:370px;top:452px;width:3px;height:301px;background:#ff8a00;"></div>
<div class="a" style="left:373px;top:524px;width:16px;height:74px;background:#38b0b0;"></div>
<div class="a" style="left:389px;top:524px;width:146px;height:74px;background:#4dfafa;"></div>
<div class="a" style="left:385px;top:520px;width:8px;height:8px;background:#ff4d4d;"></div>
<div class="a" style="left:385px;top:557px;width:8px;height:8px;background:#ff4d4d;"></div>
<div class="a" style="left:385px;top:594px;width:8px;height:8px;background:#ff4d4d;"></div>
<div class="a" style="left:530px;top:557px;width:8px;height:8px;background:#ff4d4d;"></div>
<div class="a" style="left:610px;top:452px;width:18px;height:301px;background:#0c2224;"></div>
<div class="a" style="left:612px;top:452px;width:2px;height:301px;background:#ff8a00;"></div>
<div class="a" style="left:614px;top:452px;width:1.3px;height:301px;background:#6ccf38;"></div>
<div class="a" style="left:615.3px;top:452px;width:1.7px;height:301px;background:#00a844;"></div>
<div class="a" style="left:617px;top:452px;width:2px;height:301px;background:#5ccc3a;"></div>
<div class="a" style="left:619px;top:452px;width:1px;height:301px;background:#c07a20;"></div>
<div class="a" style="left:623px;top:452px;width:3px;height:301px;background:#ff8a00;"></div>
<div class="a" style="left:615px;top:520px;width:8px;height:8px;background:#ff4d4d;"></div>
<div class="a" style="left:615px;top:557px;width:8px;height:8px;background:#ff4d4d;"></div>
<div class="a" style="left:615px;top:594px;width:8px;height:8px;background:#ff4d4d;"></div>
<div class="a" style="left:771px;top:102px;width:1142px;height:22px;background:#e5e5e5;"></div>
<div class="t " style="left:775.8px;top:106.3px;font-size:14.7px;line-height:14.7px;color:#222;">Eigensolver Analysis</div>
<svg class="a" style="left:1893px;top:108px;" width="24" height="10" viewBox="0 0 24 10"><rect x="1" y="3.5" width="6" height="5" fill="none" stroke="#222" stroke-width="1.1"/><path d="M3,3.5 L3,1 L9,1 L9,6 L7,6" fill="none" stroke="#222" stroke-width="1.3"/><path d="M14,1 L22,9 M22,1 L14,9" stroke="#111" stroke-width="2"/></svg>
<div class="a" style="left:771px;top:124px;width:1142px;height:573px;background:#f4f4f4;"></div>
<div class="t " style="left:777.0px;top:127.0px;font-size:13.3px;line-height:13.3px;color:#222;">Mode list</div>
<div class="t " style="left:1644.3px;top:127.0px;font-size:13.3px;line-height:13.3px;color:#222;">DECK</div>
<div class="a" style="left:772px;top:147px;width:861px;height:166px;background:#f2f2f2;box-sizing:border-box;border:1px solid #dcdcdc;border-radius:2px;"></div>
<div class="a" style="left:1640px;top:147px;width:280px;height:166px;background:#f2f2f2;box-sizing:border-box;border:1px solid #dcdcdc;border-radius:2px;"></div>
<div class="a" style="left:783px;top:154px;width:838px;height:147px;background:#f5f5f5;box-sizing:border-box;border:1px solid #a6a6a6;"></div>
<div class="a" style="left:784px;top:195px;width:821px;height:23px;background:#9ecaee;"></div>
<div class="a" style="left:784px;top:217px;width:821px;height:1px;background:#c3c3c3;"></div>
<div class="a" style="left:784px;top:218px;width:821px;height:23px;background:#d1d9df;"></div>
<div class="a" style="left:784px;top:240px;width:821px;height:1px;background:#c3c3c3;"></div>
<div class="a" style="left:784px;top:241px;width:821px;height:23px;background:#e6e6e6;"></div>
<div class="a" style="left:784px;top:263px;width:821px;height:1px;background:#c3c3c3;"></div>
<div class="a" style="left:784px;top:264px;width:821px;height:23px;background:#d1d9df;"></div>
<div class="a" style="left:784px;top:286px;width:821px;height:1px;background:#c3c3c3;"></div>
<div class="a" style="left:860px;top:196px;width:101px;height:21px;background:#a8d1f4;box-sizing:border-box;border:1px solid #78aee0;"></div>
<div class="a" style="left:859px;top:155px;width:1px;height:130px;background:#c8c8c8;"></div>
<div class="a" style="left:961px;top:155px;width:1px;height:130px;background:#c8c8c8;"></div>
<div class="a" style="left:1081px;top:155px;width:1px;height:130px;background:#c8c8c8;"></div>
<div class="a" style="left:1182px;top:155px;width:1px;height:130px;background:#c8c8c8;"></div>
<div class="a" style="left:1268px;top:155px;width:1px;height:130px;background:#c8c8c8;"></div>
<div class="a" style="left:1411px;top:155px;width:1px;height:130px;background:#c8c8c8;"></div>
<div class="a" style="left:1569px;top:155px;width:1px;height:130px;background:#c8c8c8;"></div>
<div class="t " style="left:776.8px;width:90px;text-align:center;top:169.4px;font-size:13.3px;line-height:13.3px;color:#222;">mode #</div>
<div class="t " style="left:830.5px;width:160px;text-align:center;top:161.4px;font-size:13.3px;line-height:13.3px;color:#222;">effective</div>
<div class="t " style="left:830.5px;width:160px;text-align:center;top:178.4px;font-size:13.3px;line-height:13.3px;color:#222;">index</div>
<div class="t " style="left:941.4px;width:160px;text-align:center;top:161.4px;font-size:13.3px;line-height:13.3px;color:#222;">wavelength</div>
<div class="t " style="left:941.4px;width:160px;text-align:center;top:178.4px;font-size:13.3px;line-height:13.3px;color:#222;">(&micro;m)</div>
<div class="t " style="left:1051.8px;width:160px;text-align:center;top:161.4px;font-size:13.3px;line-height:13.3px;color:#222;">loss</div>
<div class="t " style="left:1051.8px;width:160px;text-align:center;top:178.4px;font-size:13.3px;line-height:13.3px;color:#222;">(dB/&micro;m)</div>
<div class="t " style="left:1145.3px;width:160px;text-align:center;top:161.4px;font-size:13.3px;line-height:13.3px;color:#222;">group</div>
<div class="t " style="left:1145.3px;width:160px;text-align:center;top:178.4px;font-size:13.3px;line-height:13.3px;color:#222;">index</div>
<div class="t " style="left:1259.7px;width:160px;text-align:center;top:161.4px;font-size:13.3px;line-height:13.3px;color:#222;">TE polarization</div>
<div class="t " style="left:1259.7px;width:160px;text-align:center;top:178.4px;font-size:13.3px;line-height:13.3px;color:#222;">fraction (Ey)</div>
<div class="t " style="left:1410.2px;width:160px;text-align:center;top:161.4px;font-size:13.3px;line-height:13.3px;color:#222;">waveguide TE/TM</div>
<div class="t " style="left:1410.2px;width:160px;text-align:center;top:178.4px;font-size:13.3px;line-height:13.3px;color:#222;">fraction (%)</div>
<svg class="a" style="left:817px;top:156px;" width="9" height="5" viewBox="0 0 9 5"><polyline points="0.5,4.5 4.5,0.5 8.5,4.5" fill="none" stroke="#333" stroke-width="1"/></svg>
<div class="t " style="left:1596.0px;top:161.4px;font-size:13.3px;line-height:13.3px;color:#222;width:9px;overflow:hidden;">e</div>
<div class="t " style="left:787.5px;top:199.7px;font-size:13.3px;line-height:13.3px;color:#222;">1</div>
<div class="t " style="left:863.0px;top:199.7px;font-size:13.3px;line-height:13.3px;color:#222;">1.563564</div>
<div class="t " style="left:964.9px;top:199.7px;font-size:13.3px;line-height:13.3px;color:#222;">1.55</div>
<div class="t " style="left:1084.9px;top:199.7px;font-size:13.3px;line-height:13.3px;color:#222;">0.0000</div>
<div class="t " style="left:1185.8px;top:199.7px;font-size:13.3px;line-height:13.3px;color:#222;">1.778027</div>
<div class="t " style="left:1271.9px;top:199.7px;font-size:13.3px;line-height:13.3px;color:#222;">100</div>
<div class="t " style="left:1414.5px;top:199.7px;font-size:13.3px;line-height:13.3px;color:#222;">99.99 / 91.07</div>
<div class="t " style="left:1572.9px;top:199.7px;font-size:13.3px;line-height:13.3px;color:#222;width:33px;overflow:hidden;">25.17</div>
<div class="t " style="left:787.5px;top:222.7px;font-size:13.3px;line-height:13.3px;color:#222;">2</div>
<div class="t " style="left:863.0px;top:222.7px;font-size:13.3px;line-height:13.3px;color:#222;">1.562943</div>
<div class="t " style="left:964.9px;top:222.7px;font-size:13.3px;line-height:13.3px;color:#222;">1.55</div>
<div class="t " style="left:1084.9px;top:222.7px;font-size:13.3px;line-height:13.3px;color:#222;">0.0000</div>
<div class="t " style="left:1185.8px;top:222.7px;font-size:13.3px;line-height:13.3px;color:#222;">1.776913</div>
<div class="t " style="left:1271.9px;top:222.7px;font-size:13.3px;line-height:13.3px;color:#222;">100</div>
<div class="t " style="left:1414.5px;top:222.7px;font-size:13.3px;line-height:13.3px;color:#222;">99.89 / 91.18</div>
<div class="t " style="left:1572.9px;top:222.7px;font-size:13.3px;line-height:13.3px;color:#222;width:33px;overflow:hidden;">23.984</div>
<div class="t " style="left:787.5px;top:245.7px;font-size:13.3px;line-height:13.3px;color:#222;">3</div>
<div class="t " style="left:863.0px;top:245.7px;font-size:13.3px;line-height:13.3px;color:#222;">1.562643</div>
<div class="t " style="left:964.9px;top:245.7px;font-size:13.3px;line-height:13.3px;color:#222;">1.55</div>
<div class="t " style="left:1084.9px;top:245.7px;font-size:13.3px;line-height:13.3px;color:#222;">0.0000</div>
<div class="t " style="left:1185.8px;top:245.7px;font-size:13.3px;line-height:13.3px;color:#222;">1.779853</div>
<div class="t " style="left:1271.9px;top:245.7px;font-size:13.3px;line-height:13.3px;color:#222;">100</div>
<div class="t " style="left:1414.5px;top:245.7px;font-size:13.3px;line-height:13.3px;color:#222;">99.89 / 91.03</div>
<div class="t " style="left:1572.9px;top:245.7px;font-size:13.3px;line-height:13.3px;color:#222;width:33px;overflow:hidden;">23.098</div>
<div class="t " style="left:787.5px;top:268.7px;font-size:13.3px;line-height:13.3px;color:#222;">4</div>
<div class="t " style="left:863.0px;top:268.7px;font-size:13.3px;line-height:13.3px;color:#222;">1.562223</div>
<div class="t " style="left:964.9px;top:268.7px;font-size:13.3px;line-height:13.3px;color:#222;">1.55</div>
<div class="t " style="left:1084.9px;top:268.7px;font-size:13.3px;line-height:13.3px;color:#222;">0.0000</div>
<div class="t " style="left:1185.8px;top:268.7px;font-size:13.3px;line-height:13.3px;color:#222;">1.783749</div>
<div class="t " style="left:1271.9px;top:268.7px;font-size:13.3px;line-height:13.3px;color:#222;">100</div>
<div class="t " style="left:1414.5px;top:268.7px;font-size:13.3px;line-height:13.3px;color:#222;">99.88 / 90.83</div>
<div class="t " style="left:1572.9px;top:268.7px;font-size:13.3px;line-height:13.3px;color:#222;width:33px;overflow:hidden;">17.974</div>
<div class="a" style="left:1605px;top:155px;width:15px;height:130px;background:#f5f5f5;"></div>
<div class="a" style="left:1606px;top:171px;width:14px;height:13px;background:#bdbdbd;"></div>
<svg class="a" style="left:1607px;top:158px;" width="11" height="6" viewBox="0 0 11 6"><polyline points="0.5,5.5 5.5,0.5 10.5,5.5" fill="none" stroke="#222" stroke-width="1.2"/></svg>
<svg class="a" style="left:1607px;top:271px;" width="11" height="6" viewBox="0 0 11 6"><polyline points="0.5,0.5 5.5,5.5 10.5,0.5" fill="none" stroke="#222" stroke-width="1.2"/></svg>
<div class="a" style="left:784px;top:285px;width:821px;height:15px;background:#f5f5f5;"></div>
<div class="a" style="left:799px;top:286px;width:592px;height:14px;background:#bdbdbd;"></div>
<svg class="a" style="left:787px;top:287px;" width="6" height="11" viewBox="0 0 6 11"><polyline points="5.5,0.5 0.5,5.5 5.5,10.5" fill="none" stroke="#222" stroke-width="1.2"/></svg>
<svg class="a" style="left:1595px;top:287px;" width="6" height="11" viewBox="0 0 6 11"><polyline points="0.5,0.5 5.5,5.5 0.5,10.5" fill="none" stroke="#222" stroke-width="1.2"/></svg>
<div class="a" style="left:1605px;top:285px;width:15px;height:15px;background:#e6e6e6;box-sizing:border-box;border:1px solid #d0d0d0;"></div>
<div class="a" style="left:1651px;top:154px;width:256px;height:147px;background:#e6e6e6;box-sizing:border-box;border:1px solid #a6a6a6;"></div>
<div class="a" style="left:1652px;top:155px;width:57px;height:130px;background:#f5f5f5;"></div>
<div class="a" style="left:1652px;top:155px;width:57px;height:22px;background:#fbfbfb;"></div>
<div class="a" style="left:1709px;top:155px;width:99px;height:22px;background:#abcff0;"></div>
<div class="a" style="left:1808px;top:155px;width:98px;height:22px;background:#9ecaee;"></div>
<div class="a" style="left:1808px;top:155px;width:1px;height:22px;background:#c0d6ea;"></div>
<div class="a" style="left:1652px;top:177px;width:254px;height:1px;background:#d0d0d0;"></div>
<div class="t " style="left:1654.5px;top:160.4px;font-size:13.3px;line-height:13.3px;color:#222;font-weight:bold;">d-card 1</div>
<div class="t " style="left:1712.0px;top:160.4px;font-size:13.3px;line-height:13.3px;color:#222;">global_mode1</div>
<div class="t " style="left:1812.0px;top:160.4px;font-size:13.3px;line-height:13.3px;color:#222;">1.55</div>
<div class="a" style="left:1652px;top:285px;width:254px;height:15px;background:#f5f5f5;"></div>
<div class="a" style="left:1668px;top:286px;width:111px;height:14px;background:#bdbdbd;"></div>
<svg class="a" style="left:1656px;top:287px;" width="6" height="11" viewBox="0 0 6 11"><polyline points="5.5,0.5 0.5,5.5 5.5,10.5" fill="none" stroke="#222" stroke-width="1.2"/></svg>
<svg class="a" style="left:1896px;top:287px;" width="6" height="11" viewBox="0 0 6 11"><polyline points="0.5,0.5 5.5,5.5 0.5,10.5" fill="none" stroke="#222" stroke-width="1.2"/></svg>
<svg class="a" style="left:1324px;top:316px;" width="42" height="4" viewBox="0 0 42 4"><rect x="0" y="0" width="1" height="1" fill="#b0b0b0"/><rect x="0" y="2" width="1" height="1" fill="#b0b0b0"/><rect x="3" y="0" width="1" height="1" fill="#b0b0b0"/><rect x="3" y="2" width="1" height="1" fill="#b0b0b0"/><rect x="6" y="0" width="1" height="1" fill="#b0b0b0"/><rect x="6" y="2" width="1" height="1" fill="#b0b0b0"/><rect x="9" y="0" width="1" height="1" fill="#b0b0b0"/><rect x="9" y="2" width="1" height="1" fill="#b0b0b0"/><rect x="12" y="0" width="1" height="1" fill="#b0b0b0"/><rect x="12" y="2" width="1" height="1" fill="#b0b0b0"/><rect x="15" y="0" width="1" height="1" fill="#b0b0b0"/><rect x="15" y="2" width="1" height="1" fill="#b0b0b0"/><rect x="18" y="0" width="1" height="1" fill="#b0b0b0"/><rect x="18" y="2" width="1" height="1" fill="#b0b0b0"/><rect x="21" y="0" width="1" height="1" fill="#b0b0b0"/><rect x="21" y="2" width="1" height="1" fill="#b0b0b0"/><rect x="24" y="0" width="1" height="1" fill="#b0b0b0"/><rect x="24" y="2" width="1" height="1" fill="#b0b0b0"/><rect x="27" y="0" width="1" height="1" fill="#b0b0b0"/><rect x="27" y="2" width="1" height="1" fill="#b0b0b0"/><rect x="30" y="0" width="1" height="1" fill="#b0b0b0"/><rect x="30" y="2" width="1" height="1" fill="#b0b0b0"/><rect x="33" y="0" width="1" height="1" fill="#b0b0b0"/><rect x="33" y="2" width="1" height="1" fill="#b0b0b0"/><rect x="36" y="0" width="1" height="1" fill="#b0b0b0"/><rect x="36" y="2" width="1" height="1" fill="#b0b0b0"/><rect x="39" y="0" width="1" height="1" fill="#b0b0b0"/><rect x="39" y="2" width="1" height="1" fill="#b0b0b0"/></svg>
<div class="a" style="left:771px;top:321px;width:1142px;height:1px;background:#a0a0a0;"></div>
<div class="a" style="left:771px;top:697px;width:1142px;height:1px;background:#a0a0a0;"></div>
<div class="a" style="left:771px;top:321px;width:1px;height:377px;background:#a0a0a0;"></div>
<div class="a" style="left:776px;top:322px;width:1px;height:375px;background:#a8a8a8;"></div>
<div class="a" style="left:786px;top:322px;width:1px;height:375px;background:#a8a8a8;"></div>
<div class="a" style="left:797px;top:322px;width:1px;height:375px;background:#a8a8a8;"></div>
<div class="a" style="left:1170px;top:322px;width:1px;height:375px;background:#a8a8a8;"></div>
<div class="a" style="left:1180px;top:322px;width:1px;height:375px;background:#a8a8a8;"></div>
<div class="a" style="left:1188px;top:322px;width:1px;height:375px;background:#a8a8a8;"></div>
<div class="a" style="left:1199px;top:322px;width:1px;height:375px;background:#a8a8a8;"></div>
<div class="a" style="left:1876px;top:322px;width:1px;height:375px;background:#a8a8a8;"></div>
<div class="a" style="left:1887px;top:322px;width:1px;height:375px;background:#a8a8a8;"></div>
<div class="a" style="left:1898px;top:322px;width:1px;height:375px;background:#a8a8a8;"></div>
<div class="a" style="left:1200px;top:322px;width:676px;height:375px;background:#ffffff;"></div>
<div class="a" style="left:1538px;top:322px;width:1px;height:375px;background:#f0f0f0;"></div>
<div class="a" style="left:1201px;top:322px;width:1px;height:375px;background:#ececec;"></div>
<div class="a" style="left:1899px;top:322px;width:14px;height:375px;background:#f3f3f3;"></div>
<div class="a" style="left:1902px;top:380px;width:11px;height:179px;background:#bdbdbd;"></div>
<svg class="a" style="left:1902px;top:326px;" width="11" height="6" viewBox="0 0 11 6"><polyline points="0.5,5.5 5.5,0.5 10.5,5.5" fill="none" stroke="#222" stroke-width="1.2"/></svg>
<svg class="a" style="left:1902px;top:687px;" width="11" height="6" viewBox="0 0 11 6"><polyline points="0.5,0.5 5.5,5.5 10.5,0.5" fill="none" stroke="#222" stroke-width="1.2"/></svg>
<div class="a" style="left:808px;top:330px;width:353px;height:107px;background:#f2f2f2;box-sizing:border-box;border:1px solid #dcdcdc;border-radius:2px;"></div>
<div class="t " style="left:811.0px;width:100px;text-align:right;top:346.1px;font-size:13.3px;line-height:13.3px;color:#222;">overlap</div>
<div class="t " style="left:791.0px;width:120px;text-align:right;top:374.1px;font-size:13.3px;line-height:13.3px;color:#222;">power coupling</div>
<div class="a" style="left:918px;top:342px;width:231px;height:21px;background:#e6e6e6;box-sizing:border-box;border:1px solid #a6a6a6;"></div>
<div class="a" style="left:918px;top:370px;width:231px;height:21px;background:#e6e6e6;box-sizing:border-box;border:1px solid #a6a6a6;"></div>
<div class="t " style="left:921.5px;top:346.4px;font-size:13.3px;line-height:13.3px;color:#9aa3ad;">0.207356</div>
<div class="t " style="left:921.5px;top:374.4px;font-size:13.3px;line-height:13.3px;color:#9aa3ad;">0.206986</div>
<div class="a" style="left:918px;top:397px;width:116px;height:28px;background:#fff;box-sizing:border-box;border:1px solid #666;"></div>
<div class="t " style="left:918.0px;width:116px;text-align:center;top:404.9px;font-size:13.3px;line-height:13.3px;color:#222;">Calculate Overlap</div>
<div class="a" style="left:811px;top:445px;width:14px;height:14px;background:#f4f4f4;box-sizing:border-box;border:1px solid #78b4ee;"></div>
<div class="t " style="left:832.3px;top:446.9px;font-size:13.3px;line-height:13.3px;color:#222;">shift d-card center</div>
<div class="a" style="left:808px;top:465px;width:353px;height:164px;background:#f2f2f2;box-sizing:border-box;border:1px solid #dcdcdc;border-radius:2px;"></div>
<div class="a" style="left:940px;top:476px;width:209px;height:23px;background:#ffffff;"></div>
<div class="t " style="left:974.0px;width:120px;text-align:center;top:482.4px;font-size:13.3px;line-height:13.3px;color:#222;">recenter</div>
<svg class="a" style="left:1138px;top:485px;" width="9" height="5" viewBox="0 0 9 5"><polygon points="0,0 9,0 4.5,5" fill="#555"/></svg>
<div class="a" style="left:940px;top:505px;width:209px;height:22px;background:#e6e6e6;box-sizing:border-box;border:1px solid #a6a6a6;"></div>
<div class="t " style="left:813.0px;width:120px;text-align:right;top:510.4px;font-size:13.3px;line-height:13.3px;color:#6e6e6e;">x shift (&micro;m)</div>
<div class="a" style="left:940px;top:533px;width:209px;height:22px;background:#e6e6e6;box-sizing:border-box;border:1px solid #a6a6a6;"></div>
<div class="t " style="left:813.0px;width:120px;text-align:right;top:538.4px;font-size:13.3px;line-height:13.3px;color:#6e6e6e;">y shift (&micro;m)</div>
<div class="a" style="left:940px;top:561px;width:209px;height:22px;background:#e6e6e6;box-sizing:border-box;border:1px solid #a6a6a6;"></div>
<div class="t " style="left:813.0px;width:120px;text-align:right;top:566.4px;font-size:13.3px;line-height:13.3px;color:#6e6e6e;">z shift (&micro;m)</div>
<div class="a" style="left:819px;top:589px;width:115px;height:28px;background:#bdbdbd;box-sizing:border-box;border:1px solid #9a9a9a;"></div>
<div class="t " style="left:819.0px;width:115px;text-align:center;top:597.4px;font-size:13.3px;line-height:13.3px;color:#7b7b7b;"><u>O</u>ptimize Position</div>
<div class="a" style="left:771px;top:705px;width:127px;height:23px;background:#fff;box-sizing:border-box;border:1px solid #666;"></div>
<div class="t " style="left:771.0px;width:127px;text-align:center;top:711.4px;font-size:13.3px;line-height:13.3px;color:#222;">Advanced options...</div>
<div class="a" style="left:1820px;top:705px;width:56px;height:23px;background:#fff;box-sizing:border-box;border:1px solid #666;"></div>
<div class="t " style="left:1820.0px;width:56px;text-align:center;top:711.4px;font-size:13.3px;line-height:13.3px;color:#222;">Undock</div>
<div class="a" style="left:1882px;top:705px;width:40px;height:23px;background:#fff;box-sizing:border-box;border:1px solid #666;"></div>
<div class="t " style="left:1886.0px;top:711.4px;font-size:13.3px;line-height:13.3px;color:#222;">Hide</div>
<div class="a" style="left:771px;top:728px;width:1142px;height:1px;background:#a8a8a8;"></div>
<div class="a" style="left:771px;top:729px;width:1px;height:25px;background:#a8a8a8;"></div>
<div class="t " style="left:776.0px;top:735.6px;font-size:13.3px;line-height:13.3px;color:#222;">Script File Editor</div>
<div class="a" style="left:878px;top:729px;width:1px;height:25px;background:#a8a8a8;"></div>
<div class="t " style="left:883.0px;top:735.6px;font-size:13.3px;line-height:13.3px;color:#222;">Object Library</div>
<div class="a" style="left:971px;top:729px;width:1px;height:25px;background:#a8a8a8;"></div>
<div class="t " style="left:976.0px;top:735.6px;font-size:13.3px;line-height:13.3px;color:#222;">Optimizations and Sweeps</div>
<div class="a" style="left:1138px;top:729px;width:1px;height:25px;background:#a8a8a8;"></div>
<div class="t " style="left:1143.0px;top:735.6px;font-size:13.3px;line-height:13.3px;color:#222;">EME Analysis Window</div>
<div class="a" style="left:1275.5px;top:728px;width:130.5px;height:26px;background:linear-gradient(#c3d5e3,#8ac4f6);border-left:1px solid #a8a8a8;border-right:1px solid #a8a8a8;box-sizing:border-box;"></div>
<div class="t " style="left:1280.5px;top:735.6px;font-size:13.3px;line-height:13.3px;color:#222;">Eigensolver Analysis</div>
<svg class="a" style="left:0px;top:0px;pointer-events:none;" width="1913" height="754" viewBox="0 0 1913 754"><defs><linearGradient id="bs0" x1="0" x2="1"><stop offset="0" stop-color="#000089"/><stop offset="0.25" stop-color="#00008d"/><stop offset="0.5" stop-color="#00008e"/><stop offset="0.75" stop-color="#00008d"/><stop offset="1" stop-color="#000089"/></linearGradient><linearGradient id="bs1" x1="0" x2="1"><stop offset="0" stop-color="#00009e"/><stop offset="0.25" stop-color="#0000a4"/><stop offset="0.5" stop-color="#0000a8"/><stop offset="0.75" stop-color="#0000a4"/><stop offset="1" stop-color="#00009e"/></linearGradient><linearGradient id="bs2" x1="0" x2="1"><stop offset="0" stop-color="#0000e5"/><stop offset="0.25" stop-color="#0000f2"/><stop offset="0.5" stop-color="#0000f9"/><stop offset="0.75" stop-color="#0000f2"/><stop offset="1" stop-color="#0000e5"/></linearGradient><linearGradient id="bs3" x1="0" x2="1"><stop offset="0" stop-color="#0056ff"/><stop offset="0.25" stop-color="#0071ff"/><stop offset="0.5" stop-color="#007fff"/><stop offset="0.75" stop-color="#0071ff"/><stop offset="1" stop-color="#0056ff"/></linearGradient><linearGradient id="bs4" x1="0" x2="1"><stop offset="0" stop-color="#00f9ff"/><stop offset="0.25" stop-color="#51ffad"/><stop offset="0.5" stop-color="#7fff7f"/><stop offset="0.75" stop-color="#51ffad"/><stop offset="1" stop-color="#00f9ff"/></linearGradient><linearGradient id="bs5" x1="0" x2="1"><stop offset="0" stop-color="#ff9e00"/><stop offset="0.25" stop-color="#ff3400"/><stop offset="0.5" stop-color="#f90000"/><stop offset="0.75" stop-color="#ff3400"/><stop offset="1" stop-color="#ff9e00"/></linearGradient><linearGradient id="bs6" x1="0" x2="1"><stop offset="0" stop-color="#00f9ff"/><stop offset="0.25" stop-color="#51ffad"/><stop offset="0.5" stop-color="#7fff7f"/><stop offset="0.75" stop-color="#51ffad"/><stop offset="1" stop-color="#00f9ff"/></linearGradient><linearGradient id="bs7" x1="0" x2="1"><stop offset="0" stop-color="#0075ff"/><stop offset="0.25" stop-color="#008fff"/><stop offset="0.5" stop-color="#009eff"/><stop offset="0.75" stop-color="#008fff"/><stop offset="1" stop-color="#0075ff"/></linearGradient><linearGradient id="bs8" x1="0" x2="1"><stop offset="0" stop-color="#0000ef"/><stop offset="0.25" stop-color="#0000fc"/><stop offset="0.5" stop-color="#0005ff"/><stop offset="0.75" stop-color="#0000fc"/><stop offset="1" stop-color="#0000ef"/></linearGradient><linearGradient id="bs9" x1="0" x2="1"><stop offset="0" stop-color="#0000a8"/><stop offset="0.25" stop-color="#0000ae"/><stop offset="0.5" stop-color="#0000b2"/><stop offset="0.75" stop-color="#0000ae"/><stop offset="1" stop-color="#0000a8"/></linearGradient><linearGradient id="bs10" x1="0" x2="1"><stop offset="0" stop-color="#00008b"/><stop offset="0.25" stop-color="#00008f"/><stop offset="0.5" stop-color="#000091"/><stop offset="0.75" stop-color="#00008f"/><stop offset="1" stop-color="#00008b"/></linearGradient><radialGradient id="glow"><stop offset="0" stop-color="#0040ff" stop-opacity="0.9"/><stop offset="0.5" stop-color="#0010e0" stop-opacity="0.5"/><stop offset="1" stop-color="#0000a0" stop-opacity="0"/></radialGradient></defs><rect x="1282" y="351" width="156" height="318" fill="#00007f"/><rect x="1282" y="522" width="156" height="5" fill="url(#bs0)"/><rect x="1282" y="527" width="156" height="7" fill="url(#bs1)"/><rect x="1282" y="534" width="156" height="4" fill="url(#bs2)"/><rect x="1282" y="538" width="156" height="3" fill="url(#bs3)"/><rect x="1282" y="541" width="156" height="3.3" fill="url(#bs4)"/><rect x="1282" y="546" width="156" height="1.2" fill="url(#bs5)"/><rect x="1282" y="547.2" width="156" height="3" fill="url(#bs6)"/><rect x="1282" y="550.2" width="156" height="4" fill="url(#bs7)"/><rect x="1282" y="554.2" width="156" height="3" fill="url(#bs8)"/><rect x="1282" y="557.2" width="156" height="6" fill="url(#bs9)"/><rect x="1282" y="563.2" width="156" height="7" fill="url(#bs10)"/><rect x="1282" y="544.3" width="156" height="1.8" fill="#000"/><ellipse cx="1360" cy="488" rx="38" ry="9" fill="url(#glow)"/><polyline points="1282,509.4 1323.5,509.4 1323.5,372.8 1396.7,372.8 1396.7,509.4 1438,509.4" fill="none" stroke="#000" stroke-width="1.7"/><line x1="1323.5" y1="429.8" x2="1396.7" y2="429.8" stroke="#000" stroke-width="1.7"/><line x1="1323.5" y1="487.9" x2="1396.7" y2="487.9" stroke="#000" stroke-width="1.7"/><rect x="1359" y="597" width="2" height="6" fill="#000"/><defs><linearGradient id="cb1" x1="0" x2="0" y1="0" y2="1"><stop offset="0.000" stop-color="#7f0000"/><stop offset="0.025" stop-color="#990000"/><stop offset="0.050" stop-color="#b20000"/><stop offset="0.075" stop-color="#cb0000"/><stop offset="0.100" stop-color="#e50000"/><stop offset="0.125" stop-color="#ff0000"/><stop offset="0.150" stop-color="#ff1900"/><stop offset="0.175" stop-color="#ff3300"/><stop offset="0.200" stop-color="#ff4c00"/><stop offset="0.225" stop-color="#ff6500"/><stop offset="0.250" stop-color="#ff7f00"/><stop offset="0.275" stop-color="#ff9900"/><stop offset="0.300" stop-color="#ffb200"/><stop offset="0.325" stop-color="#ffcb00"/><stop offset="0.350" stop-color="#ffe500"/><stop offset="0.375" stop-color="#ffff00"/><stop offset="0.400" stop-color="#e5ff19"/><stop offset="0.425" stop-color="#cbff33"/><stop offset="0.450" stop-color="#b2ff4c"/><stop offset="0.475" stop-color="#99ff65"/><stop offset="0.500" stop-color="#7fff7f"/><stop offset="0.525" stop-color="#65ff99"/><stop offset="0.550" stop-color="#4cffb2"/><stop offset="0.575" stop-color="#33ffcb"/><stop offset="0.600" stop-color="#19ffe5"/><stop offset="0.625" stop-color="#00ffff"/><stop offset="0.650" stop-color="#00e5ff"/><stop offset="0.675" stop-color="#00cbff"/><stop offset="0.700" stop-color="#00b2ff"/><stop offset="0.725" stop-color="#0099ff"/><stop offset="0.750" stop-color="#007fff"/><stop offset="0.775" stop-color="#0065ff"/><stop offset="0.800" stop-color="#004cff"/><stop offset="0.825" stop-color="#0033ff"/><stop offset="0.850" stop-color="#0019ff"/><stop offset="0.875" stop-color="#0000ff"/><stop offset="0.900" stop-color="#0000e5"/><stop offset="0.925" stop-color="#0000cb"/><stop offset="0.950" stop-color="#0000b2"/><stop offset="0.975" stop-color="#000099"/><stop offset="1.000" stop-color="#00007f"/></linearGradient></defs><rect x="1448" y="361" width="10" height="298" fill="url(#cb1)"/><line x1="1448" y1="659.0" x2="1462" y2="659.0" stroke="#000" stroke-width="1.2"/><line x1="1448" y1="599.4" x2="1462" y2="599.4" stroke="#000" stroke-width="1.2"/><line x1="1448" y1="539.8" x2="1462" y2="539.8" stroke="#000" stroke-width="1.2"/><line x1="1448" y1="480.2" x2="1462" y2="480.2" stroke="#000" stroke-width="1.2"/><line x1="1448" y1="420.6" x2="1462" y2="420.6" stroke="#000" stroke-width="1.2"/><line x1="1448" y1="361.0" x2="1462" y2="361.0" stroke="#000" stroke-width="1.2"/><line x1="1281.5" y1="343" x2="1281.5" y2="670" stroke="#000" stroke-width="1.6"/><polygon points="1281.5,332 1276.5,346 1286.5,346" fill="#000"/><line x1="1281" y1="669.5" x2="1444" y2="669.5" stroke="#000" stroke-width="1.6"/><polygon points="1456,669.5 1442,664.5 1442,674.5" fill="#000"/><line x1="1281" y1="351.0" x2="1290" y2="351.0" stroke="#000" stroke-width="1.3"/><line x1="1281" y1="372.0" x2="1286" y2="372.0" stroke="#000" stroke-width="1.3"/><line x1="1281" y1="392.9" x2="1286" y2="392.9" stroke="#000" stroke-width="1.3"/><line x1="1281" y1="413.9" x2="1290" y2="413.9" stroke="#000" stroke-width="1.3"/><line x1="1281" y1="434.8" x2="1286" y2="434.8" stroke="#000" stroke-width="1.3"/><line x1="1281" y1="455.8" x2="1286" y2="455.8" stroke="#000" stroke-width="1.3"/><line x1="1281" y1="476.7" x2="1290" y2="476.7" stroke="#000" stroke-width="1.3"/><line x1="1281" y1="497.7" x2="1286" y2="497.7" stroke="#000" stroke-width="1.3"/><line x1="1281" y1="518.6" x2="1286" y2="518.6" stroke="#000" stroke-width="1.3"/><line x1="1281" y1="539.6" x2="1290" y2="539.6" stroke="#000" stroke-width="1.3"/><line x1="1281" y1="560.5" x2="1286" y2="560.5" stroke="#000" stroke-width="1.3"/><line x1="1281" y1="581.5" x2="1286" y2="581.5" stroke="#000" stroke-width="1.3"/><line x1="1281" y1="602.4" x2="1290" y2="602.4" stroke="#000" stroke-width="1.3"/><line x1="1281" y1="623.4" x2="1286" y2="623.4" stroke="#000" stroke-width="1.3"/><line x1="1281" y1="644.3" x2="1286" y2="644.3" stroke="#000" stroke-width="1.3"/><line x1="1281" y1="665.3" x2="1290" y2="665.3" stroke="#000" stroke-width="1.3"/><line x1="1287.0" y1="669" x2="1287.0" y2="661" stroke="#000" stroke-width="1.1"/><line x1="1292.2" y1="669" x2="1292.2" y2="665" stroke="#000" stroke-width="1.1"/><line x1="1297.4" y1="669" x2="1297.4" y2="665" stroke="#000" stroke-width="1.1"/><line x1="1302.6" y1="669" x2="1302.6" y2="665" stroke="#000" stroke-width="1.1"/><line x1="1307.8" y1="669" x2="1307.8" y2="665" stroke="#000" stroke-width="1.1"/><line x1="1313.0" y1="669" x2="1313.0" y2="665" stroke="#000" stroke-width="1.1"/><line x1="1318.2" y1="669" x2="1318.2" y2="665" stroke="#000" stroke-width="1.1"/><line x1="1323.4" y1="669" x2="1323.4" y2="665" stroke="#000" stroke-width="1.1"/><line x1="1328.6" y1="669" x2="1328.6" y2="665" stroke="#000" stroke-width="1.1"/><line x1="1333.8" y1="669" x2="1333.8" y2="665" stroke="#000" stroke-width="1.1"/><line x1="1339.0" y1="669" x2="1339.0" y2="661" stroke="#000" stroke-width="1.1"/><line x1="1344.2" y1="669" x2="1344.2" y2="665" stroke="#000" stroke-width="1.1"/><line x1="1349.4" y1="669" x2="1349.4" y2="665" stroke="#000" stroke-width="1.1"/><line x1="1354.6" y1="669" x2="1354.6" y2="665" stroke="#000" stroke-width="1.1"/><line x1="1359.8" y1="669" x2="1359.8" y2="665" stroke="#000" stroke-width="1.1"/><line x1="1365.0" y1="669" x2="1365.0" y2="665" stroke="#000" stroke-width="1.1"/><line x1="1370.2" y1="669" x2="1370.2" y2="665" stroke="#000" stroke-width="1.1"/><line x1="1375.4" y1="669" x2="1375.4" y2="665" stroke="#000" stroke-width="1.1"/><line x1="1380.6" y1="669" x2="1380.6" y2="665" stroke="#000" stroke-width="1.1"/><line x1="1385.8" y1="669" x2="1385.8" y2="665" stroke="#000" stroke-width="1.1"/><line x1="1391.0" y1="669" x2="1391.0" y2="661" stroke="#000" stroke-width="1.1"/><line x1="1396.2" y1="669" x2="1396.2" y2="665" stroke="#000" stroke-width="1.1"/><line x1="1401.4" y1="669" x2="1401.4" y2="665" stroke="#000" stroke-width="1.1"/><line x1="1406.6" y1="669" x2="1406.6" y2="665" stroke="#000" stroke-width="1.1"/><line x1="1411.8" y1="669" x2="1411.8" y2="665" stroke="#000" stroke-width="1.1"/><line x1="1417.0" y1="669" x2="1417.0" y2="665" stroke="#000" stroke-width="1.1"/><line x1="1422.2" y1="669" x2="1422.2" y2="665" stroke="#000" stroke-width="1.1"/><line x1="1427.4" y1="669" x2="1427.4" y2="665" stroke="#000" stroke-width="1.1"/><line x1="1432.6" y1="669" x2="1432.6" y2="665" stroke="#000" stroke-width="1.1"/><line x1="1437.8" y1="669" x2="1437.8" y2="665" stroke="#000" stroke-width="1.1"/></svg>
<div class="t " style="left:1248.0px;width:30px;text-align:right;top:346.8px;font-size:10.5px;line-height:10.5px;color:#222;">12</div>
<div class="t " style="left:1248.0px;width:30px;text-align:right;top:409.7px;font-size:10.5px;line-height:10.5px;color:#222;">9</div>
<div class="t " style="left:1248.0px;width:30px;text-align:right;top:472.5px;font-size:10.5px;line-height:10.5px;color:#222;">6</div>
<div class="t " style="left:1248.0px;width:30px;text-align:right;top:535.4px;font-size:10.5px;line-height:10.5px;color:#222;">3</div>
<div class="t " style="left:1248.0px;width:30px;text-align:right;top:598.3px;font-size:10.5px;line-height:10.5px;color:#222;">0</div>
<div class="t " style="left:1248.0px;width:30px;text-align:right;top:661.1px;font-size:10.5px;line-height:10.5px;color:#222;">-3</div>
<div class="t " style="left:1272.0px;width:30px;text-align:center;top:672.6px;font-size:10.5px;line-height:10.5px;color:#222;">-14</div>
<div class="t " style="left:1324.0px;width:30px;text-align:center;top:672.6px;font-size:10.5px;line-height:10.5px;color:#222;">-4</div>
<div class="t " style="left:1376.0px;width:30px;text-align:center;top:672.6px;font-size:10.5px;line-height:10.5px;color:#222;">6</div>
<div class="t " style="left:1463.0px;top:654.8px;font-size:10.5px;line-height:10.5px;color:#222;">0.0</div>
<div class="t " style="left:1463.0px;top:595.2px;font-size:10.5px;line-height:10.5px;color:#222;">0.2</div>
<div class="t " style="left:1463.0px;top:535.6px;font-size:10.5px;line-height:10.5px;color:#222;">0.4</div>
<div class="t " style="left:1463.0px;top:476.0px;font-size:10.5px;line-height:10.5px;color:#222;">0.6</div>
<div class="t " style="left:1463.0px;top:416.4px;font-size:10.5px;line-height:10.5px;color:#222;">0.8</div>
<div class="t " style="left:1463.0px;top:356.8px;font-size:10.5px;line-height:10.5px;color:#222;">1.0</div>
<div class="a" style="left:1301px;top:686px;width:120px;height:11px;overflow:hidden;"><div class="t" style="left:0;top:2px;width:120px;text-align:center;font-size:13.3px;line-height:13.3px;color:#222;">y (microns)</div></div>
<div class="t" style="left:1186px;top:502px;width:80px;text-align:center;font-size:13.3px;line-height:14px;color:#222;transform:rotate(-90deg);">z (microns)</div>
<svg class="a" style="left:0px;top:0px;pointer-events:none;" width="1913" height="754" viewBox="0 0 1913 754"><defs><radialGradient id="gs"><stop offset="0.000" stop-color="#7f0000"/><stop offset="0.025" stop-color="#890000"/><stop offset="0.050" stop-color="#930000"/><stop offset="0.075" stop-color="#9e0000"/><stop offset="0.100" stop-color="#a80000"/><stop offset="0.125" stop-color="#b20000"/><stop offset="0.150" stop-color="#c50000"/><stop offset="0.175" stop-color="#d80000"/><stop offset="0.200" stop-color="#ea0000"/><stop offset="0.225" stop-color="#fd0000"/><stop offset="0.250" stop-color="#ff1500"/><stop offset="0.275" stop-color="#ff2e00"/><stop offset="0.300" stop-color="#ff4700"/><stop offset="0.325" stop-color="#ff6000"/><stop offset="0.350" stop-color="#ff8a00"/><stop offset="0.375" stop-color="#ffb400"/><stop offset="0.400" stop-color="#ffde00"/><stop offset="0.425" stop-color="#f7ff07"/><stop offset="0.450" stop-color="#d1ff2d"/><stop offset="0.475" stop-color="#abff53"/><stop offset="0.500" stop-color="#7fff7f"/><stop offset="0.525" stop-color="#53ffab"/><stop offset="0.550" stop-color="#26ffd8"/><stop offset="0.575" stop-color="#00f9ff"/><stop offset="0.600" stop-color="#00ddff"/><stop offset="0.625" stop-color="#00c1ff"/><stop offset="0.650" stop-color="#00a5ff"/><stop offset="0.675" stop-color="#0088ff"/><stop offset="0.700" stop-color="#0069ff"/><stop offset="0.725" stop-color="#0047ff"/><stop offset="0.750" stop-color="#0026ff"/><stop offset="0.775" stop-color="#0005ff"/><stop offset="0.800" stop-color="#0000f1"/><stop offset="0.825" stop-color="#0000de"/><stop offset="0.850" stop-color="#0000cb"/><stop offset="0.875" stop-color="#0000b8"/><stop offset="0.900" stop-color="#0000a6"/><stop offset="0.925" stop-color="#00009c"/><stop offset="0.950" stop-color="#000093"/><stop offset="0.975" stop-color="#000089"/><stop offset="1.000" stop-color="#00007f"/></radialGradient></defs><rect x="1620" y="351" width="156" height="318" fill="#00007f"/><ellipse cx="1697.3" cy="536.5" rx="31.6" ry="120" fill="url(#gs)"/><defs><linearGradient id="cb2" x1="0" x2="0" y1="0" y2="1"><stop offset="0.000" stop-color="#7f0000"/><stop offset="0.025" stop-color="#990000"/><stop offset="0.050" stop-color="#b20000"/><stop offset="0.075" stop-color="#cb0000"/><stop offset="0.100" stop-color="#e50000"/><stop offset="0.125" stop-color="#ff0000"/><stop offset="0.150" stop-color="#ff1900"/><stop offset="0.175" stop-color="#ff3300"/><stop offset="0.200" stop-color="#ff4c00"/><stop offset="0.225" stop-color="#ff6500"/><stop offset="0.250" stop-color="#ff7f00"/><stop offset="0.275" stop-color="#ff9900"/><stop offset="0.300" stop-color="#ffb200"/><stop offset="0.325" stop-color="#ffcb00"/><stop offset="0.350" stop-color="#ffe500"/><stop offset="0.375" stop-color="#ffff00"/><stop offset="0.400" stop-color="#e5ff19"/><stop offset="0.425" stop-color="#cbff33"/><stop offset="0.450" stop-color="#b2ff4c"/><stop offset="0.475" stop-color="#99ff65"/><stop offset="0.500" stop-color="#7fff7f"/><stop offset="0.525" stop-color="#65ff99"/><stop offset="0.550" stop-color="#4cffb2"/><stop offset="0.575" stop-color="#33ffcb"/><stop offset="0.600" stop-color="#19ffe5"/><stop offset="0.625" stop-color="#00ffff"/><stop offset="0.650" stop-color="#00e5ff"/><stop offset="0.675" stop-color="#00cbff"/><stop offset="0.700" stop-color="#00b2ff"/><stop offset="0.725" stop-color="#0099ff"/><stop offset="0.750" stop-color="#007fff"/><stop offset="0.775" stop-color="#0065ff"/><stop offset="0.800" stop-color="#004cff"/><stop offset="0.825" stop-color="#0033ff"/><stop offset="0.850" stop-color="#0019ff"/><stop offset="0.875" stop-color="#0000ff"/><stop offset="0.900" stop-color="#0000e5"/><stop offset="0.925" stop-color="#0000cb"/><stop offset="0.950" stop-color="#0000b2"/><stop offset="0.975" stop-color="#000099"/><stop offset="1.000" stop-color="#00007f"/></linearGradient></defs><rect x="1786" y="361" width="10" height="298" fill="url(#cb2)"/><line x1="1786" y1="659.0" x2="1800" y2="659.0" stroke="#000" stroke-width="1.2"/><line x1="1786" y1="599.4" x2="1800" y2="599.4" stroke="#000" stroke-width="1.2"/><line x1="1786" y1="539.8" x2="1800" y2="539.8" stroke="#000" stroke-width="1.2"/><line x1="1786" y1="480.2" x2="1800" y2="480.2" stroke="#000" stroke-width="1.2"/><line x1="1786" y1="420.6" x2="1800" y2="420.6" stroke="#000" stroke-width="1.2"/><line x1="1786" y1="361.0" x2="1800" y2="361.0" stroke="#000" stroke-width="1.2"/><line x1="1619.5" y1="343" x2="1619.5" y2="670" stroke="#000" stroke-width="1.6"/><polygon points="1619.5,332 1614.5,346 1624.5,346" fill="#000"/><line x1="1619" y1="669.5" x2="1782" y2="669.5" stroke="#000" stroke-width="1.6"/><polygon points="1794,669.5 1780,664.5 1780,674.5" fill="#000"/><line x1="1619" y1="351.0" x2="1628" y2="351.0" stroke="#000" stroke-width="1.3"/><line x1="1619" y1="372.0" x2="1624" y2="372.0" stroke="#000" stroke-width="1.3"/><line x1="1619" y1="392.9" x2="1624" y2="392.9" stroke="#000" stroke-width="1.3"/><line x1="1619" y1="413.9" x2="1628" y2="413.9" stroke="#000" stroke-width="1.3"/><line x1="1619" y1="434.8" x2="1624" y2="434.8" stroke="#000" stroke-width="1.3"/><line x1="1619" y1="455.8" x2="1624" y2="455.8" stroke="#000" stroke-width="1.3"/><line x1="1619" y1="476.7" x2="1628" y2="476.7" stroke="#000" stroke-width="1.3"/><line x1="1619" y1="497.7" x2="1624" y2="497.7" stroke="#000" stroke-width="1.3"/><line x1="1619" y1="518.6" x2="1624" y2="518.6" stroke="#000" stroke-width="1.3"/><line x1="1619" y1="539.6" x2="1628" y2="539.6" stroke="#000" stroke-width="1.3"/><line x1="1619" y1="560.5" x2="1624" y2="560.5" stroke="#000" stroke-width="1.3"/><line x1="1619" y1="581.5" x2="1624" y2="581.5" stroke="#000" stroke-width="1.3"/><line x1="1619" y1="602.4" x2="1628" y2="602.4" stroke="#000" stroke-width="1.3"/><line x1="1619" y1="623.4" x2="1624" y2="623.4" stroke="#000" stroke-width="1.3"/><line x1="1619" y1="644.3" x2="1624" y2="644.3" stroke="#000" stroke-width="1.3"/><line x1="1619" y1="665.3" x2="1628" y2="665.3" stroke="#000" stroke-width="1.3"/><line x1="1625.0" y1="669" x2="1625.0" y2="661" stroke="#000" stroke-width="1.1"/><line x1="1630.2" y1="669" x2="1630.2" y2="665" stroke="#000" stroke-width="1.1"/><line x1="1635.4" y1="669" x2="1635.4" y2="665" stroke="#000" stroke-width="1.1"/><line x1="1640.6" y1="669" x2="1640.6" y2="665" stroke="#000" stroke-width="1.1"/><line x1="1645.8" y1="669" x2="1645.8" y2="665" stroke="#000" stroke-width="1.1"/><line x1="1651.0" y1="669" x2="1651.0" y2="665" stroke="#000" stroke-width="1.1"/><line x1="1656.2" y1="669" x2="1656.2" y2="665" stroke="#000" stroke-width="1.1"/><line x1="1661.4" y1="669" x2="1661.4" y2="665" stroke="#000" stroke-width="1.1"/><line x1="1666.6" y1="669" x2="1666.6" y2="665" stroke="#000" stroke-width="1.1"/><line x1="1671.8" y1="669" x2="1671.8" y2="665" stroke="#000" stroke-width="1.1"/><line x1="1677.0" y1="669" x2="1677.0" y2="661" stroke="#000" stroke-width="1.1"/><line x1="1682.2" y1="669" x2="1682.2" y2="665" stroke="#000" stroke-width="1.1"/><line x1="1687.4" y1="669" x2="1687.4" y2="665" stroke="#000" stroke-width="1.1"/><line x1="1692.6" y1="669" x2="1692.6" y2="665" stroke="#000" stroke-width="1.1"/><line x1="1697.8" y1="669" x2="1697.8" y2="665" stroke="#000" stroke-width="1.1"/><line x1="1703.0" y1="669" x2="1703.0" y2="665" stroke="#000" stroke-width="1.1"/><line x1="1708.2" y1="669" x2="1708.2" y2="665" stroke="#000" stroke-width="1.1"/><line x1="1713.4" y1="669" x2="1713.4" y2="665" stroke="#000" stroke-width="1.1"/><line x1="1718.6" y1="669" x2="1718.6" y2="665" stroke="#000" stroke-width="1.1"/><line x1="1723.8" y1="669" x2="1723.8" y2="665" stroke="#000" stroke-width="1.1"/><line x1="1729.0" y1="669" x2="1729.0" y2="661" stroke="#000" stroke-width="1.1"/><line x1="1734.2" y1="669" x2="1734.2" y2="665" stroke="#000" stroke-width="1.1"/><line x1="1739.4" y1="669" x2="1739.4" y2="665" stroke="#000" stroke-width="1.1"/><line x1="1744.6" y1="669" x2="1744.6" y2="665" stroke="#000" stroke-width="1.1"/><line x1="1749.8" y1="669" x2="1749.8" y2="665" stroke="#000" stroke-width="1.1"/><line x1="1755.0" y1="669" x2="1755.0" y2="665" stroke="#000" stroke-width="1.1"/><line x1="1760.2" y1="669" x2="1760.2" y2="665" stroke="#000" stroke-width="1.1"/><line x1="1765.4" y1="669" x2="1765.4" y2="665" stroke="#000" stroke-width="1.1"/><line x1="1770.6" y1="669" x2="1770.6" y2="665" stroke="#000" stroke-width="1.1"/><line x1="1775.8" y1="669" x2="1775.8" y2="665" stroke="#000" stroke-width="1.1"/></svg>
<div class="t " style="left:1586.0px;width:30px;text-align:right;top:346.8px;font-size:10.5px;line-height:10.5px;color:#222;">12</div>
<div class="t " style="left:1586.0px;width:30px;text-align:right;top:409.7px;font-size:10.5px;line-height:10.5px;color:#222;">9</div>
<div class="t " style="left:1586.0px;width:30px;text-align:right;top:472.5px;font-size:10.5px;line-height:10.5px;color:#222;">6</div>
<div class="t " style="left:1586.0px;width:30px;text-align:right;top:535.4px;font-size:10.5px;line-height:10.5px;color:#222;">3</div>
<div class="t " style="left:1586.0px;width:30px;text-align:right;top:598.3px;font-size:10.5px;line-height:10.5px;color:#222;">0</div>
<div class="t " style="left:1586.0px;width:30px;text-align:right;top:661.1px;font-size:10.5px;line-height:10.5px;color:#222;">-3</div>
<div class="t " style="left:1610.0px;width:30px;text-align:center;top:672.6px;font-size:10.5px;line-height:10.5px;color:#222;">-14</div>
<div class="t " style="left:1662.0px;width:30px;text-align:center;top:672.6px;font-size:10.5px;line-height:10.5px;color:#222;">-4</div>
<div class="t " style="left:1714.0px;width:30px;text-align:center;top:672.6px;font-size:10.5px;line-height:10.5px;color:#222;">6</div>
<div class="t " style="left:1801.0px;top:654.8px;font-size:10.5px;line-height:10.5px;color:#222;">0.0</div>
<div class="t " style="left:1801.0px;top:595.2px;font-size:10.5px;line-height:10.5px;color:#222;">0.2</div>
<div class="t " style="left:1801.0px;top:535.6px;font-size:10.5px;line-height:10.5px;color:#222;">0.4</div>
<div class="t " style="left:1801.0px;top:476.0px;font-size:10.5px;line-height:10.5px;color:#222;">0.6</div>
<div class="t " style="left:1801.0px;top:416.4px;font-size:10.5px;line-height:10.5px;color:#222;">0.8</div>
<div class="t " style="left:1801.0px;top:356.8px;font-size:10.5px;line-height:10.5px;color:#222;">1.0</div>
<div class="a" style="left:1639px;top:686px;width:120px;height:11px;overflow:hidden;"><div class="t" style="left:0;top:2px;width:120px;text-align:center;font-size:13.3px;line-height:13.3px;color:#222;">y (microns)</div></div>
<div class="t" style="left:1524px;top:502px;width:80px;text-align:center;font-size:13.3px;line-height:14px;color:#222;transform:rotate(-90deg);">z (microns)</div>
</body></html>
